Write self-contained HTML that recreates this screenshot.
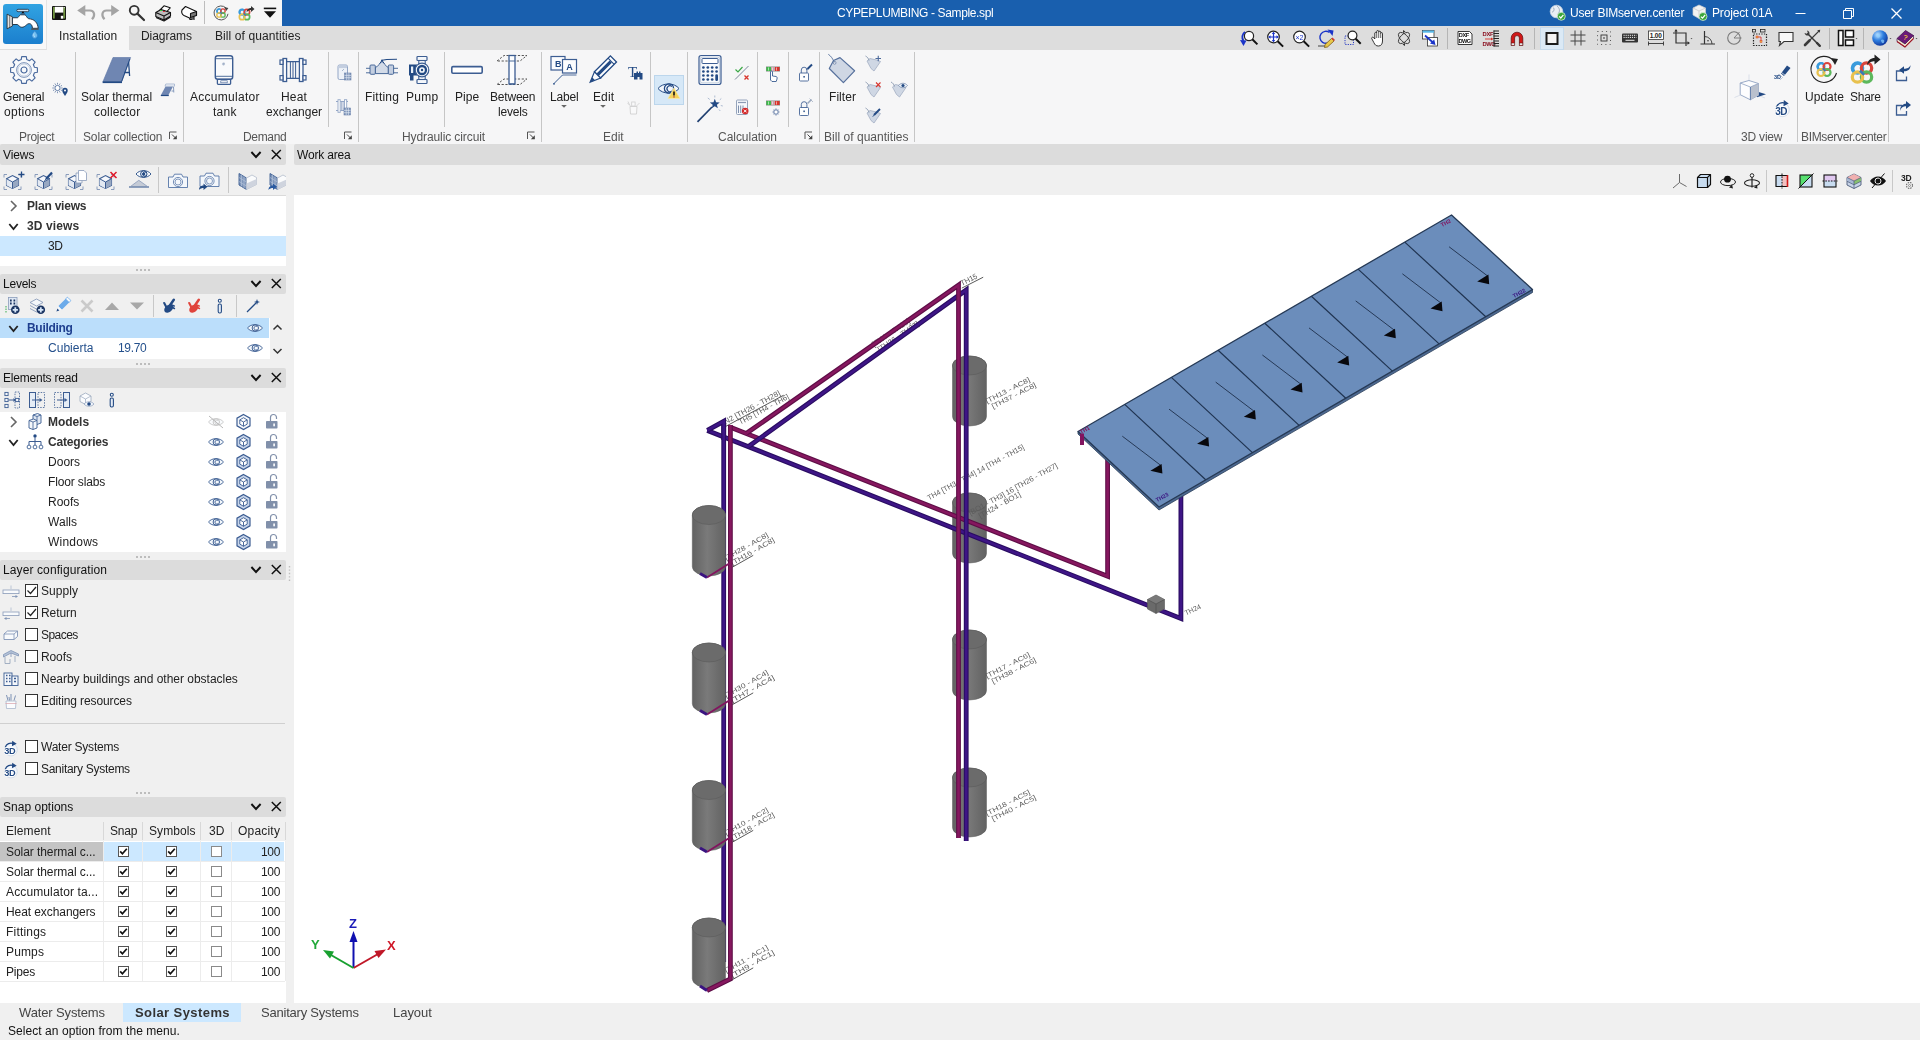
<!DOCTYPE html>
<html lang="en"><head><meta charset="utf-8"><title>CYPEPLUMBING - Sample.spl</title>
<style>
*{box-sizing:border-box;margin:0;padding:0}
html,body{width:1920px;height:1040px;overflow:hidden;background:#f0f0f0;font-family:"Liberation Sans",sans-serif;font-size:12px;color:#222}
.abs{position:absolute}
.t{position:absolute;white-space:nowrap;line-height:14px;height:14px;will-change:transform}
.c{transform:translateX(-50%);text-align:center}
svg{position:absolute;overflow:visible}
#title{position:absolute;left:282px;top:0;width:1638px;height:26px;background:#195fae}
#qa{position:absolute;left:0;top:0;width:282px;height:26px;background:#f6f6f6}
#tabs{position:absolute;left:0;top:26px;width:1920px;height:24px;background:#dddddd}
#tabsel{position:absolute;left:0px;top:26px;width:129px;height:24px;background:#f6f6f6}
#ribbon{position:absolute;left:0;top:50px;width:1920px;height:94px;background:#f6f6f7}
.vsep{position:absolute;width:1px;background:#c4c4c4}
.hdr{position:absolute;height:21px;background:#dcdcdc;border-radius:2px}
.white{position:absolute;background:#fff}
.sel{position:absolute;background:#cce8ff}
.glab{color:#555}
.cb{position:absolute;width:13px;height:13px;border:1px solid #333;background:#fff}
.scb{position:absolute;width:11px;height:11px;border:1px solid #555;background:#fff}
.dots{position:absolute;width:14px;height:2px;background:repeating-linear-gradient(90deg,#bdbdbd 0 2px,transparent 2px 4px)}

</style></head>
<body>
<div id="qa"></div><div id="title"></div><div id="tabs"></div><div id="tabsel"></div><div id="ribbon"></div><div class="abs" style="left:0px;top:0px;width:47px;height:50px;background:#f8f8f8;border-right:1px solid #e4e4e4;border-bottom:1px solid #dedede"></div><div class="t " style="left:836.8px;top:6px;letter-spacing:-0.363px;color:#fff">CYPEPLUMBING - Sample.spl</div><div class="t " style="left:1570.3px;top:6px;letter-spacing:-0.241px;color:#fff">User BIMserver.center</div><div class="t " style="left:1712.3px;top:6px;letter-spacing:-0.158px;color:#fff">Project 01A</div><div class="t " style="left:59.2px;top:29px;letter-spacing:0.077px;">Installation</div><div class="t " style="left:141.2px;top:29px;letter-spacing:-0.056px;">Diagrams</div><div class="t " style="left:215.4px;top:29px;letter-spacing:0.092px;">Bill of quantities</div><div class="t " style="left:3.35px;top:90px;letter-spacing:-0.199px;">General</div><div class="t " style="left:3.65px;top:105.3px;letter-spacing:0.286px;">options</div><div class="t " style="left:81.45px;top:90px;letter-spacing:-0.020px;">Solar thermal</div><div class="t " style="left:93.85px;top:105.3px;letter-spacing:0.180px;">collector</div><div class="t " style="left:189.8px;top:90px;letter-spacing:0.283px;">Accumulator</div><div class="t " style="left:212.8px;top:105.3px;letter-spacing:0.280px;">tank</div><div class="t " style="left:280.75px;top:90px;letter-spacing:0.188px;">Heat</div><div class="t " style="left:265.75px;top:105.3px;letter-spacing:0.007px;">exchanger</div><div class="t " style="left:365.0px;top:90px;letter-spacing:0.189px;">Fitting</div><div class="t " style="left:405.75px;top:90px;letter-spacing:0.288px;">Pump</div><div class="t " style="left:454.95px;top:90px;letter-spacing:0.021px;">Pipe</div><div class="t " style="left:489.95px;top:90px;letter-spacing:-0.200px;">Between</div><div class="t " style="left:497.85px;top:105.3px;letter-spacing:-0.197px;">levels</div><div class="t " style="left:549.75px;top:90px;letter-spacing:-0.172px;">Label</div><div class="t " style="left:592.85px;top:90px;letter-spacing:0.106px;">Edit</div><div class="t " style="left:828.8px;top:90px;letter-spacing:0.056px;">Filter</div><div class="t " style="left:1805.05px;top:90px;letter-spacing:0.034px;">Update</div><div class="t " style="left:1850.35px;top:90px;letter-spacing:-0.264px;">Share</div><div class="t glab" style="left:19.15px;top:130px;letter-spacing:-0.293px;">Project</div><div class="t glab" style="left:82.75px;top:130px;letter-spacing:-0.130px;">Solar collection</div><div class="t glab" style="left:242.85px;top:130px;letter-spacing:-0.343px;">Demand</div><div class="t glab" style="left:401.5px;top:130px;letter-spacing:-0.099px;">Hydraulic circuit</div><div class="t glab" style="left:603.4px;top:130px;letter-spacing:-0.019px;">Edit</div><div class="t glab" style="left:717.5px;top:130px;letter-spacing:-0.033px;">Calculation</div><div class="t glab" style="left:824.4px;top:130px;letter-spacing:0.031px;">Bill of quantities</div><div class="t glab" style="left:1741.35px;top:130px;letter-spacing:-0.197px;">3D view</div><div class="t glab" style="left:1800.55px;top:130px;letter-spacing:-0.337px;">BIMserver.center</div><div class="vsep" style="left:75px;top:52px;height:90px;background:#c6c6c6"></div><div class="vsep" style="left:183px;top:52px;height:90px;background:#c6c6c6"></div><div class="vsep" style="left:358px;top:52px;height:90px;background:#c6c6c6"></div><div class="vsep" style="left:541px;top:52px;height:90px;background:#c6c6c6"></div><div class="vsep" style="left:687px;top:52px;height:90px;background:#c6c6c6"></div><div class="vsep" style="left:819px;top:52px;height:90px;background:#c6c6c6"></div><div class="vsep" style="left:914px;top:52px;height:90px;background:#c6c6c6"></div><div class="vsep" style="left:1727px;top:52px;height:90px;background:#c6c6c6"></div><div class="vsep" style="left:1797px;top:52px;height:90px;background:#c6c6c6"></div><div class="vsep" style="left:1888px;top:52px;height:90px;background:#c6c6c6"></div><div class="vsep" style="left:328px;top:52px;height:75px;background:#c6c6c6"></div><div class="vsep" style="left:444px;top:52px;height:75px;background:#c6c6c6"></div><div class="vsep" style="left:650px;top:52px;height:75px;background:#c6c6c6"></div><div class="vsep" style="left:757px;top:52px;height:75px;background:#c6c6c6"></div><div class="vsep" style="left:788px;top:52px;height:75px;background:#c6c6c6"></div><div class="hdr" style="left:0;top:144px;width:286px;height:21px"></div><div class="t " style="left:2.8px;top:147.8px;letter-spacing:-0.099px;color:#111">Views</div><div class="hdr" style="left:0;top:274px;width:286px;height:20px"></div><div class="t " style="left:2.8px;top:277.3px;letter-spacing:-0.231px;color:#111">Levels</div><div class="hdr" style="left:0;top:368px;width:286px;height:20px"></div><div class="t " style="left:2.8px;top:371.3px;letter-spacing:-0.213px;color:#111">Elements read</div><div class="hdr" style="left:0;top:560px;width:286px;height:20px"></div><div class="t " style="left:2.8px;top:563.3px;letter-spacing:0.107px;color:#111">Layer configuration</div><div class="hdr" style="left:0;top:797px;width:286px;height:20px"></div><div class="t " style="left:2.8px;top:800.3px;letter-spacing:0.020px;color:#111">Snap options</div><div class="hdr" style="left:294px;top:144px;width:1630px;height:21px"></div><div class="t " style="left:296.8px;top:147.8px;letter-spacing:-0.170px;color:#111">Work area</div><div class="abs" style="left:0px;top:196px;width:286px;height:70px;background:#fff;"></div><div class="abs" style="left:0px;top:195px;width:286px;height:1px;background:#dadada;"></div><div class="abs" style="left:0px;top:236px;width:286px;height:20px;background:#cce8ff;"></div><div class="t " style="left:26.8px;top:199px;letter-spacing:-0.207px;font-weight:bold;color:#333">Plan views</div><div class="t " style="left:26.8px;top:219px;letter-spacing:0.117px;font-weight:bold;color:#333">3D views</div><div class="t " style="left:47.8px;top:239px;letter-spacing:-0.370px;">3D</div><div class="abs" style="left:0px;top:318px;width:270px;height:41px;background:#fff;"></div><div class="abs" style="left:0px;top:318px;width:269px;height:20px;background:#bbdefb;"></div><div class="t " style="left:27.3px;top:321px;letter-spacing:-0.299px;font-weight:bold;color:#1f3f8f">Building</div><div class="t " style="left:48.1px;top:341px;letter-spacing:0.018px;color:#24508c">Cubierta</div><div class="t " style="left:117.8px;top:341px;letter-spacing:-0.346px;color:#24508c">19.70</div><div class="abs" style="left:0px;top:412px;width:286px;height:140px;background:#fff;"></div><div class="t " style="left:48.1px;top:415px;letter-spacing:-0.056px;font-weight:bold;color:#333">Models</div><div class="t " style="left:47.8px;top:435px;letter-spacing:-0.172px;font-weight:bold;color:#333">Categories</div><div class="t " style="left:47.8px;top:455px;letter-spacing:0.018px;">Doors</div><div class="t " style="left:47.8px;top:475px;letter-spacing:-0.144px;">Floor slabs</div><div class="t " style="left:47.8px;top:495px;letter-spacing:-0.010px;">Roofs</div><div class="t " style="left:47.8px;top:515px;letter-spacing:0.043px;">Walls</div><div class="t " style="left:47.8px;top:535px;letter-spacing:0.231px;">Windows</div><div class="cb" style="left:25px;top:584px"></div><svg style="left:25px;top:584px" width="13" height="13"><path d="M2.5,6.5 L5.5,9.5 L11,3" fill="none" stroke="#222" stroke-width="1.2"/></svg><div class="t " style="left:41.1px;top:584px;letter-spacing:0.051px;">Supply</div><div class="cb" style="left:25px;top:606px"></div><svg style="left:25px;top:606px" width="13" height="13"><path d="M2.5,6.5 L5.5,9.5 L11,3" fill="none" stroke="#222" stroke-width="1.2"/></svg><div class="t " style="left:41.1px;top:606px;letter-spacing:-0.086px;">Return</div><div class="cb" style="left:25px;top:628px"></div><div class="t " style="left:41.1px;top:628px;letter-spacing:-0.538px;">Spaces</div><div class="cb" style="left:25px;top:650px"></div><div class="t " style="left:41.1px;top:650px;letter-spacing:-0.110px;">Roofs</div><div class="cb" style="left:25px;top:672px"></div><div class="t " style="left:41.1px;top:672px;letter-spacing:-0.018px;">Nearby buildings and other obstacles</div><div class="cb" style="left:25px;top:694px"></div><div class="t " style="left:41.1px;top:694px;letter-spacing:-0.113px;">Editing resources</div><div class="cb" style="left:25px;top:740px"></div><div class="t " style="left:41.1px;top:740px;letter-spacing:-0.223px;">Water Systems</div><div class="cb" style="left:25px;top:762px"></div><div class="t " style="left:41.1px;top:762px;letter-spacing:-0.285px;">Sanitary Systems</div><div class="abs" style="left:0px;top:723px;width:285px;height:1px;background:#d0d0d0;"></div><div class="abs" style="left:0px;top:841px;width:286px;height:162px;background:#fff;"></div><div class="abs" style="left:0px;top:842px;width:103px;height:19px;background:#c4c4c4;"></div><div class="abs" style="left:104px;top:842px;width:180px;height:19px;background:#cce8ff;"></div><div class="t " style="left:5.8px;top:824px;letter-spacing:0.083px;">Element</div><div class="t " style="left:109.8px;top:824px;letter-spacing:-0.231px;">Snap</div><div class="t " style="left:148.8px;top:824px;letter-spacing:0.069px;">Symbols</div><div class="t " style="left:208.8px;top:824px;letter-spacing:-0.020px;">3D</div><div class="t " style="left:238.3px;top:824px;letter-spacing:0.203px;">Opacity</div><div class="vsep" style="left:103px;top:822px;height:18px;background:#d8d8d8"></div><div class="vsep" style="left:103px;top:841px;height:140px;background:#ececec"></div><div class="vsep" style="left:142px;top:822px;height:18px;background:#d8d8d8"></div><div class="vsep" style="left:142px;top:841px;height:140px;background:#ececec"></div><div class="vsep" style="left:200px;top:822px;height:18px;background:#d8d8d8"></div><div class="vsep" style="left:200px;top:841px;height:140px;background:#ececec"></div><div class="vsep" style="left:231px;top:822px;height:18px;background:#d8d8d8"></div><div class="vsep" style="left:231px;top:841px;height:140px;background:#ececec"></div><div class="vsep" style="left:285px;top:822px;height:18px;background:#d8d8d8"></div><div class="vsep" style="left:285px;top:841px;height:140px;background:#ececec"></div><div class="t " style="left:5.8px;top:845px;letter-spacing:-0.067px;">Solar thermal c...</div><div class="abs" style="left:0px;top:861px;width:285px;height:1px;background:#ececec;"></div><div class="scb" style="left:117.5px;top:846px;"></div><svg style="left:117.5px;top:846px" width="11" height="11"><path d="M2.2,5.4 L4.4,7.8 L8.8,2.8" fill="none" stroke="#111" stroke-width="1.7"/></svg><div class="scb" style="left:165.5px;top:846px;"></div><svg style="left:165.5px;top:846px" width="11" height="11"><path d="M2.2,5.4 L4.4,7.8 L8.8,2.8" fill="none" stroke="#111" stroke-width="1.7"/></svg><div class="scb" style="left:210.5px;top:846px;border-color:#8a8a8a"></div><div class="t " style="left:261.3px;top:845px;letter-spacing:-0.307px;">100</div><div class="t " style="left:5.8px;top:865px;letter-spacing:-0.067px;">Solar thermal c...</div><div class="abs" style="left:0px;top:881px;width:285px;height:1px;background:#ececec;"></div><div class="scb" style="left:117.5px;top:866px;"></div><svg style="left:117.5px;top:866px" width="11" height="11"><path d="M2.2,5.4 L4.4,7.8 L8.8,2.8" fill="none" stroke="#111" stroke-width="1.7"/></svg><div class="scb" style="left:165.5px;top:866px;"></div><svg style="left:165.5px;top:866px" width="11" height="11"><path d="M2.2,5.4 L4.4,7.8 L8.8,2.8" fill="none" stroke="#111" stroke-width="1.7"/></svg><div class="scb" style="left:210.5px;top:866px;border-color:#8a8a8a"></div><div class="t " style="left:261.3px;top:865px;letter-spacing:-0.307px;">100</div><div class="t " style="left:5.8px;top:885px;letter-spacing:0.127px;">Accumulator ta...</div><div class="abs" style="left:0px;top:901px;width:285px;height:1px;background:#ececec;"></div><div class="scb" style="left:117.5px;top:886px;"></div><svg style="left:117.5px;top:886px" width="11" height="11"><path d="M2.2,5.4 L4.4,7.8 L8.8,2.8" fill="none" stroke="#111" stroke-width="1.7"/></svg><div class="scb" style="left:165.5px;top:886px;"></div><svg style="left:165.5px;top:886px" width="11" height="11"><path d="M2.2,5.4 L4.4,7.8 L8.8,2.8" fill="none" stroke="#111" stroke-width="1.7"/></svg><div class="scb" style="left:210.5px;top:886px;border-color:#8a8a8a"></div><div class="t " style="left:261.3px;top:885px;letter-spacing:-0.307px;">100</div><div class="t " style="left:5.8px;top:905px;letter-spacing:-0.081px;">Heat exchangers</div><div class="abs" style="left:0px;top:921px;width:285px;height:1px;background:#ececec;"></div><div class="scb" style="left:117.5px;top:906px;"></div><svg style="left:117.5px;top:906px" width="11" height="11"><path d="M2.2,5.4 L4.4,7.8 L8.8,2.8" fill="none" stroke="#111" stroke-width="1.7"/></svg><div class="scb" style="left:165.5px;top:906px;"></div><svg style="left:165.5px;top:906px" width="11" height="11"><path d="M2.2,5.4 L4.4,7.8 L8.8,2.8" fill="none" stroke="#111" stroke-width="1.7"/></svg><div class="scb" style="left:210.5px;top:906px;border-color:#8a8a8a"></div><div class="t " style="left:261.3px;top:905px;letter-spacing:-0.307px;">100</div><div class="t " style="left:5.8px;top:925px;letter-spacing:0.203px;">Fittings</div><div class="abs" style="left:0px;top:941px;width:285px;height:1px;background:#ececec;"></div><div class="scb" style="left:117.5px;top:926px;"></div><svg style="left:117.5px;top:926px" width="11" height="11"><path d="M2.2,5.4 L4.4,7.8 L8.8,2.8" fill="none" stroke="#111" stroke-width="1.7"/></svg><div class="scb" style="left:165.5px;top:926px;"></div><svg style="left:165.5px;top:926px" width="11" height="11"><path d="M2.2,5.4 L4.4,7.8 L8.8,2.8" fill="none" stroke="#111" stroke-width="1.7"/></svg><div class="scb" style="left:210.5px;top:926px;border-color:#8a8a8a"></div><div class="t " style="left:261.3px;top:925px;letter-spacing:-0.307px;">100</div><div class="t " style="left:5.8px;top:945px;letter-spacing:0.150px;">Pumps</div><div class="abs" style="left:0px;top:961px;width:285px;height:1px;background:#ececec;"></div><div class="scb" style="left:117.5px;top:946px;"></div><svg style="left:117.5px;top:946px" width="11" height="11"><path d="M2.2,5.4 L4.4,7.8 L8.8,2.8" fill="none" stroke="#111" stroke-width="1.7"/></svg><div class="scb" style="left:165.5px;top:946px;"></div><svg style="left:165.5px;top:946px" width="11" height="11"><path d="M2.2,5.4 L4.4,7.8 L8.8,2.8" fill="none" stroke="#111" stroke-width="1.7"/></svg><div class="scb" style="left:210.5px;top:946px;border-color:#8a8a8a"></div><div class="t " style="left:261.3px;top:945px;letter-spacing:-0.307px;">100</div><div class="t " style="left:5.8px;top:965px;letter-spacing:-0.204px;">Pipes</div><div class="abs" style="left:0px;top:981px;width:285px;height:1px;background:#ececec;"></div><div class="scb" style="left:117.5px;top:966px;"></div><svg style="left:117.5px;top:966px" width="11" height="11"><path d="M2.2,5.4 L4.4,7.8 L8.8,2.8" fill="none" stroke="#111" stroke-width="1.7"/></svg><div class="scb" style="left:165.5px;top:966px;"></div><svg style="left:165.5px;top:966px" width="11" height="11"><path d="M2.2,5.4 L4.4,7.8 L8.8,2.8" fill="none" stroke="#111" stroke-width="1.7"/></svg><div class="scb" style="left:210.5px;top:966px;border-color:#8a8a8a"></div><div class="t " style="left:261.3px;top:965px;letter-spacing:-0.307px;">100</div><div class="dots" style="left:136px;top:269px"></div><div class="dots" style="left:136px;top:363px"></div><div class="dots" style="left:136px;top:556px"></div><div class="dots" style="left:136px;top:792px"></div><div class="abs" style="left:123px;top:1003px;width:118px;height:19px;background:#cce8ff;"></div><div class="t " style="left:19.0px;top:1006px;letter-spacing:-0.134px;font-size:13px;color:#444">Water Systems</div><div class="t " style="left:135.1px;top:1006px;letter-spacing:0.415px;font-size:13px;font-weight:bold;color:#333">Solar Systems</div><div class="t " style="left:261.1px;top:1006px;letter-spacing:-0.215px;font-size:13px;color:#444">Sanitary Systems</div><div class="t " style="left:393.3px;top:1006px;letter-spacing:-0.039px;font-size:13px;color:#444">Layout</div><div class="t " style="left:8.2px;top:1024px;letter-spacing:0.058px;color:#111">Select an option from the menu.</div><div class="abs" style="left:294px;top:195px;width:1626px;height:808px;background:#fff;"></div><svg id="scene" style="left:0;top:0" width="1920" height="1040" viewBox="0 0 1920 1040"><defs><linearGradient id="tg" x1="0" x2="1" y1="0" y2="0"><stop offset="0" stop-color="#626262"/><stop offset="0.45" stop-color="#7a7a7a"/><stop offset="1" stop-color="#626262"/></linearGradient></defs><path d="M723.7,424 L723.7,962" fill="none" stroke="#2a0d62" stroke-width="4.8" stroke-linejoin="miter" stroke-miterlimit="2.2" stroke-linecap="butt"/><path d="M723.7,424 L723.7,962" fill="none" stroke="#3e1586" stroke-width="2.5999999999999996" stroke-linejoin="miter" stroke-miterlimit="2.2" stroke-linecap="butt"/><path d="M692.3,515.0 L692.3,566.5 A16.600000000000023,9.5 0 0 0 725.5,566.5 L725.5,515.0 A16.600000000000023,9.5 0 0 0 692.3,515.0Z" fill="url(#tg)" stroke="#5c5c5c" stroke-width="0.5"/><ellipse cx="708.9" cy="515.0" rx="16.600000000000023" ry="9.5" fill="#6b6b6b" stroke="#5a5a5a" stroke-width="0.6"/><path d="M692.3,652.5 L692.3,703.5 A16.600000000000023,9.5 0 0 0 725.5,703.5 L725.5,652.5 A16.600000000000023,9.5 0 0 0 692.3,652.5Z" fill="url(#tg)" stroke="#5c5c5c" stroke-width="0.5"/><ellipse cx="708.9" cy="652.5" rx="16.600000000000023" ry="9.5" fill="#6b6b6b" stroke="#5a5a5a" stroke-width="0.6"/><path d="M692.3,790.0 L692.3,841.0 A16.600000000000023,9.5 0 0 0 725.5,841.0 L725.5,790.0 A16.600000000000023,9.5 0 0 0 692.3,790.0Z" fill="url(#tg)" stroke="#5c5c5c" stroke-width="0.5"/><ellipse cx="708.9" cy="790.0" rx="16.600000000000023" ry="9.5" fill="#6b6b6b" stroke="#5a5a5a" stroke-width="0.6"/><path d="M692.3,927.5 L692.3,978.5 A16.600000000000023,9.5 0 0 0 725.5,978.5 L725.5,927.5 A16.600000000000023,9.5 0 0 0 692.3,927.5Z" fill="url(#tg)" stroke="#5c5c5c" stroke-width="0.5"/><ellipse cx="708.9" cy="927.5" rx="16.600000000000023" ry="9.5" fill="#6b6b6b" stroke="#5a5a5a" stroke-width="0.6"/><path d="M952.5,365.5 L952.5,416.5 A17.0,9.5 0 0 0 986.5,416.5 L986.5,365.5 A17.0,9.5 0 0 0 952.5,365.5Z" fill="url(#tg)" stroke="#5c5c5c" stroke-width="0.5"/><ellipse cx="969.5" cy="365.5" rx="17.0" ry="9.5" fill="#6b6b6b" stroke="#5a5a5a" stroke-width="0.6"/><path d="M952.5,502.5 L952.5,553.5 A17.0,9.5 0 0 0 986.5,553.5 L986.5,502.5 A17.0,9.5 0 0 0 952.5,502.5Z" fill="url(#tg)" stroke="#5c5c5c" stroke-width="0.5"/><ellipse cx="969.5" cy="502.5" rx="17.0" ry="9.5" fill="#6b6b6b" stroke="#5a5a5a" stroke-width="0.6"/><path d="M952.5,639.5 L952.5,690.5 A17.0,9.5 0 0 0 986.5,690.5 L986.5,639.5 A17.0,9.5 0 0 0 952.5,639.5Z" fill="url(#tg)" stroke="#5c5c5c" stroke-width="0.5"/><ellipse cx="969.5" cy="639.5" rx="17.0" ry="9.5" fill="#6b6b6b" stroke="#5a5a5a" stroke-width="0.6"/><path d="M952.5,777.5 L952.5,827.5 A17.0,9.5 0 0 0 986.5,827.5 L986.5,777.5 A17.0,9.5 0 0 0 952.5,777.5Z" fill="url(#tg)" stroke="#5c5c5c" stroke-width="0.5"/><ellipse cx="969.5" cy="777.5" rx="17.0" ry="9.5" fill="#6b6b6b" stroke="#5a5a5a" stroke-width="0.6"/><g transform="translate(724.5,561.5) rotate(-29.5)" font-family="Liberation Sans, sans-serif" font-size="6.8" fill="#5c5c5c"><text x="2" y="0.0" textLength="49" lengthAdjust="spacingAndGlyphs">[TH28 - AC8]</text><text x="5" y="7.4" textLength="49" lengthAdjust="spacingAndGlyphs">[TH16 - AC8]</text><path d="M4,8.8 L28,8.8" stroke="#444" stroke-width="0.8"/></g><g transform="translate(724.5,699) rotate(-29.5)" font-family="Liberation Sans, sans-serif" font-size="6.8" fill="#5c5c5c"><text x="2" y="0.0" textLength="49" lengthAdjust="spacingAndGlyphs">[TH30 - AC4]</text><text x="5" y="7.4" textLength="49" lengthAdjust="spacingAndGlyphs">[TH7 - AC4]</text><path d="M4,8.8 L28,8.8" stroke="#444" stroke-width="0.8"/></g><g transform="translate(724.5,836.5) rotate(-29.5)" font-family="Liberation Sans, sans-serif" font-size="6.8" fill="#5c5c5c"><text x="2" y="0.0" textLength="49" lengthAdjust="spacingAndGlyphs">[TH10 - AC2]</text><text x="5" y="7.4" textLength="49" lengthAdjust="spacingAndGlyphs">[TH18 - AC2]</text><path d="M4,8.8 L28,8.8" stroke="#444" stroke-width="0.8"/></g><g transform="translate(724.5,974) rotate(-29.5)" font-family="Liberation Sans, sans-serif" font-size="6.8" fill="#5c5c5c"><text x="2" y="0.0" textLength="49" lengthAdjust="spacingAndGlyphs">[TH11 - AC1]</text><text x="5" y="7.4" textLength="49" lengthAdjust="spacingAndGlyphs">[TH9 - AC1]</text><path d="M4,8.8 L28,8.8" stroke="#444" stroke-width="0.8"/></g><g transform="translate(987,403.5) rotate(-27)" font-family="Liberation Sans, sans-serif" font-size="6.8" fill="#5c5c5c"><text x="0" y="0.0" textLength="49" lengthAdjust="spacingAndGlyphs">[TH13 - AC8]</text><text x="3" y="7.4" textLength="49" lengthAdjust="spacingAndGlyphs">[TH37 - AC8]</text></g><g transform="translate(987,678.5) rotate(-27)" font-family="Liberation Sans, sans-serif" font-size="6.8" fill="#5c5c5c"><text x="0" y="0.0" textLength="49" lengthAdjust="spacingAndGlyphs">[TH17 - AC6]</text><text x="3" y="7.4" textLength="49" lengthAdjust="spacingAndGlyphs">[TH38 - AC6]</text></g><g transform="translate(987,816) rotate(-27)" font-family="Liberation Sans, sans-serif" font-size="6.8" fill="#5c5c5c"><text x="0" y="0.0" textLength="49" lengthAdjust="spacingAndGlyphs">[TH18 - AC5]</text><text x="3" y="7.4" textLength="49" lengthAdjust="spacingAndGlyphs">[TH40 - AC5]</text></g><g transform="translate(724.5,425) rotate(-28.3)" font-family="Liberation Sans, sans-serif" font-size="7.5" fill="#5c5c5c"><text x="1" y="0.0" textLength="63" lengthAdjust="spacingAndGlyphs">N2 [TH26 - TH28]</text><text x="14" y="7.4" textLength="56" lengthAdjust="spacingAndGlyphs">TH5 [TH4 - TH6]</text><path d="M0,1.8 L66,1.8" stroke="#444" stroke-width="0.8"/></g><g transform="translate(874,347) rotate(-34)" font-family="Liberation Sans, sans-serif" font-size="7.5" fill="#5c5c5c"><text x="0" y="0.0" textLength="44" lengthAdjust="spacingAndGlyphs">[TH4 - TH15]</text><text x="2" y="7.4" textLength="48" lengthAdjust="spacingAndGlyphs">[TH26 - TH37]</text></g><g transform="translate(929,500.5) rotate(-28.4)" font-family="Liberation Sans, sans-serif" font-size="7.5" fill="#5c5c5c"><text x="0" y="0.0" textLength="109" lengthAdjust="spacingAndGlyphs">TH4 [TH3 - TH4] 14 [TH4 - TH15]</text></g><g transform="translate(970.5,515.5) rotate(-28.9)" font-family="Liberation Sans, sans-serif" font-size="7.5" fill="#5c5c5c"><text x="0" y="0.0" textLength="100" lengthAdjust="spacingAndGlyphs">[BO1 - TH3] 16 [TH26 - TH27]</text><text x="7" y="7.4" textLength="47" lengthAdjust="spacingAndGlyphs">[TH24 - BO1]</text></g><g transform="translate(961,286.5) rotate(-27)" font-family="Liberation Sans, sans-serif" font-size="7.5" fill="#5c5c5c"><text x="1" y="0.0" textLength="18" lengthAdjust="spacingAndGlyphs">TH15</text><path d="M0,1.8 L24,1.8" stroke="#444" stroke-width="0.8"/></g><g transform="translate(1186,615.5) rotate(-25)" font-family="Liberation Sans, sans-serif" font-size="7" fill="#5c5c5c"><text x="0" y="0.0" textLength="17" lengthAdjust="spacingAndGlyphs">TH24</text></g><path d="M707.3,430.4 L1180.9,618.5 L1180.9,495" fill="none" stroke="#2a0d62" stroke-width="4.8" stroke-linejoin="miter" stroke-miterlimit="2.2" stroke-linecap="butt"/><path d="M707.3,430.4 L1180.9,618.5 L1180.9,495" fill="none" stroke="#3e1586" stroke-width="2.5999999999999996" stroke-linejoin="miter" stroke-miterlimit="2.2" stroke-linecap="butt"/><path d="M730.4,427.2 L1107.6,576.3 L1107.6,457.5" fill="none" stroke="#5e0e47" stroke-width="4.8" stroke-linejoin="miter" stroke-miterlimit="2.2" stroke-linecap="butt"/><path d="M730.4,427.2 L1107.6,576.3 L1107.6,457.5" fill="none" stroke="#86175f" stroke-width="2.5999999999999996" stroke-linejoin="miter" stroke-miterlimit="2.2" stroke-linecap="butt"/><path d="M723.7,440 L723.7,421.3 L707.3,430.4" fill="none" stroke="#2a0d62" stroke-width="4.8" stroke-linejoin="miter" stroke-miterlimit="2.2" stroke-linecap="butt"/><path d="M723.7,440 L723.7,421.3 L707.3,430.4" fill="none" stroke="#3e1586" stroke-width="2.5999999999999996" stroke-linejoin="miter" stroke-miterlimit="2.2" stroke-linecap="butt"/><path d="M748.5,446.5 L966.2,290 L966.2,841" fill="none" stroke="#2a0d62" stroke-width="4.8" stroke-linejoin="miter" stroke-miterlimit="2.2" stroke-linecap="butt"/><path d="M748.5,446.5 L966.2,290 L966.2,841" fill="none" stroke="#3e1586" stroke-width="2.5999999999999996" stroke-linejoin="miter" stroke-miterlimit="2.2" stroke-linecap="butt"/><path d="M746.5,433.3 L958.5,285.2 L958.5,838" fill="none" stroke="#5e0e47" stroke-width="4.8" stroke-linejoin="miter" stroke-miterlimit="2.2" stroke-linecap="butt"/><path d="M746.5,433.3 L958.5,285.2 L958.5,838" fill="none" stroke="#86175f" stroke-width="2.5999999999999996" stroke-linejoin="miter" stroke-miterlimit="2.2" stroke-linecap="butt"/><path d="M730.4,425 L730.4,979 L707,990.5" fill="none" stroke="#5e0e47" stroke-width="4.8" stroke-linejoin="miter" stroke-miterlimit="2.2" stroke-linecap="butt"/><path d="M730.4,425 L730.4,979 L707,990.5" fill="none" stroke="#86175f" stroke-width="2.5999999999999996" stroke-linejoin="miter" stroke-miterlimit="2.2" stroke-linecap="butt"/><path d="M730,563 L707,577.5" fill="none" stroke="#82145f" stroke-width="1.8" stroke-linejoin="miter" stroke-miterlimit="2.2" stroke-linecap="butt"/><path d="M700,573.5 L707,577.5" fill="none" stroke="#3a1380" stroke-width="3" stroke-linejoin="miter" stroke-miterlimit="2.2" stroke-linecap="butt"/><path d="M730,700 L707,714.5" fill="none" stroke="#82145f" stroke-width="1.8" stroke-linejoin="miter" stroke-miterlimit="2.2" stroke-linecap="butt"/><path d="M700,710.5 L707,714.5" fill="none" stroke="#3a1380" stroke-width="3" stroke-linejoin="miter" stroke-miterlimit="2.2" stroke-linecap="butt"/><path d="M730,837.5 L707,852.0" fill="none" stroke="#82145f" stroke-width="1.8" stroke-linejoin="miter" stroke-miterlimit="2.2" stroke-linecap="butt"/><path d="M700,848.0 L707,852.0" fill="none" stroke="#3a1380" stroke-width="3" stroke-linejoin="miter" stroke-miterlimit="2.2" stroke-linecap="butt"/><path d="M700,986 L707,990.5" fill="none" stroke="#3a1380" stroke-width="3" stroke-linejoin="miter" stroke-miterlimit="2.2" stroke-linecap="butt"/><path d="M1147.5,599.5 L1156,595 L1164.5,599.5 L1164.5,609 L1156,613.5 L1147.5,609Z" fill="#6a6a6a" stroke="#555" stroke-width="0.6"/><path d="M1147.5,599.5 L1156,604 L1164.5,599.5 L1156,595Z" fill="#7a7a7a"/><path d="M1147.5,599.5 L1156,604 L1164.5,599.5 M1156,604 L1156,613.5" fill="none" stroke="#4a4a4a" stroke-width="0.6"/><path d="M1078,434.0 L1159,510 L1532.5,292.5 L1532.5,289.5 L1159,507 L1078,431.5Z" fill="#4c6890" stroke="#2a3d58" stroke-width="0.8"/><path d="M1078,431.5 L1451.5,215 L1532.5,289.5 L1159,507Z" fill="#6b8dbb" stroke="#263a56" stroke-width="1.3" stroke-linejoin="round"/><path d="M1124.7,404.4 L1205.7,479.8" stroke="#1f3350" stroke-width="1.2"/><path d="M1171.4,377.4 L1252.4,452.6" stroke="#1f3350" stroke-width="1.2"/><path d="M1218.1,350.3 L1299.1,425.4" stroke="#1f3350" stroke-width="1.2"/><path d="M1264.8,323.2 L1345.8,398.2" stroke="#1f3350" stroke-width="1.2"/><path d="M1311.4,296.2 L1392.4,371.1" stroke="#1f3350" stroke-width="1.2"/><path d="M1358.1,269.1 L1439.1,343.9" stroke="#1f3350" stroke-width="1.2"/><path d="M1404.8,242.1 L1485.8,316.7" stroke="#1f3350" stroke-width="1.2"/><path d="M1122.3,436.2 L1160.8,465.4" stroke="#14233c" stroke-width="0.8"/><path d="M1150.4,470.8 L1161.6,464.0 L1162.4,473.6Z" fill="#08080c"/><path d="M1169.0,409.1 L1207.5,438.3" stroke="#14233c" stroke-width="0.8"/><path d="M1197.1,443.7 L1208.3,436.9 L1209.1,446.5Z" fill="#08080c"/><path d="M1215.7,382.1 L1254.2,411.3" stroke="#14233c" stroke-width="0.8"/><path d="M1243.8,416.7 L1255.0,409.9 L1255.8,419.5Z" fill="#08080c"/><path d="M1262.4,355.0 L1300.9,384.2" stroke="#14233c" stroke-width="0.8"/><path d="M1290.5,389.6 L1301.7,382.8 L1302.5,392.4Z" fill="#08080c"/><path d="M1309.0,327.9 L1347.5,357.1" stroke="#14233c" stroke-width="0.8"/><path d="M1337.2,362.6 L1348.3,355.8 L1349.2,365.4Z" fill="#08080c"/><path d="M1355.7,300.9 L1394.2,330.1" stroke="#14233c" stroke-width="0.8"/><path d="M1383.8,335.5 L1395.0,328.7 L1395.8,338.3Z" fill="#08080c"/><path d="M1402.4,273.8 L1440.9,303.0" stroke="#14233c" stroke-width="0.8"/><path d="M1430.5,308.4 L1441.7,301.6 L1442.5,311.2Z" fill="#08080c"/><path d="M1449.1,246.8 L1487.6,276.0" stroke="#14233c" stroke-width="0.8"/><path d="M1477.2,281.4 L1488.4,274.6 L1489.2,284.2Z" fill="#08080c"/><path d="M1082,433.5 L1082,445" stroke="#82145f" stroke-width="4"/><text x="1081" y="434" font-size="5.5" font-weight="bold" fill="#82145f" font-family="Liberation Sans, sans-serif" transform="rotate(-28 1081 434)">TH1</text><text x="1157" y="502" font-size="5.5" font-weight="bold" fill="#3a1380" font-family="Liberation Sans, sans-serif" transform="rotate(-28 1157 502)">TH23</text><text x="1442" y="227" font-size="5.5" font-weight="bold" fill="#82145f" font-family="Liberation Sans, sans-serif" transform="rotate(-28 1442 227)">TH2</text><text x="1514" y="298" font-size="5.5" font-weight="bold" fill="#3a1380" font-family="Liberation Sans, sans-serif" transform="rotate(-28 1514 298)">TH22</text><g stroke-width="2" fill="none"><path d="M353.5,968 L353.5,940" stroke="#1010b0"/><path d="M353.5,968 L378,954" stroke="#c01828"/><path d="M353.5,968 L331,955" stroke="#18a030"/></g><path d="M353.5,931 L357.5,942 L349.5,942Z" fill="#1010b0"/><path d="M386,949.5 L378.5,958 L374.5,951Z" fill="#c01828"/><path d="M323,950 L334,951.5 L330,958.5Z" fill="#18a030"/><g font-family="Liberation Sans, sans-serif" font-weight="bold" font-size="13"><text x="349" y="928" fill="#1a1ab8">Z</text><text x="387" y="950" fill="#d01828">X</text><text x="311" y="949" fill="#20a838">Y</text></g></svg><svg style="left:0;top:0" width="1920" height="1040" viewBox="0 0 1920 1040"><defs><clipPath id="clipv"><rect x="0" y="165" width="286" height="30"/></clipPath></defs><g transform="translate(3,4)"><defs><linearGradient id="ag" x1="0" y1="0" x2="0" y2="1"><stop offset="0" stop-color="#31a3e2"/><stop offset="1" stop-color="#1b7fce"/></linearGradient></defs><rect x="0" y="0" width="40" height="40" rx="3" fill="url(#ag)"/><path d="M4.1,10.2 L9.4,12.8 L9.4,22 L4.1,24.8Z" fill="#e4e4e4" stroke="#222" stroke-width="0.8" stroke-linejoin="round"/><path d="M6.7,11.6 L6.7,23.4" stroke="#444" stroke-width="0.7"/><path d="M9.4,13.75 L14.4,13.75 C15.5,13.75 16,11.3 17.5,10.8 L22,10.8 C23.5,11.5 23.8,14 25.5,14.6 C28,15 30.5,15.5 32.4,17.5 C34.3,19.5 35,22 35.2,24.3 L29.4,24.3 C29.3,22.5 29,20.8 27.4,19.9 C25.8,19.2 24.5,20 23.4,21 C22,22.3 20.5,23.3 18.9,23.3 C17,23.3 16,21.5 14.4,20.5 L9.4,20.5Z" fill="#fff" stroke="#1c2a3a" stroke-width="0.9" stroke-linejoin="round"/><rect x="13.8" y="5.3" width="12" height="2.4" rx="1.2" fill="#cfe3f3" stroke="#1c2a3a" stroke-width="0.8"/><rect x="18.9" y="7.7" width="2" height="1.6" fill="#111"/><path d="M17.3,10.8 L18,9.2 L21.8,9.2 L22.4,10.8Z" fill="#3a5a78"/><rect x="28.2" y="24.3" width="7.4" height="1.6" fill="#555"/><path d="M31.7,26.8 C34,29.5 34.5,30.5 34.5,31.6 A2.8,2.8 0 0 1 28.9,31.6 C28.9,30.5 29.5,29.5 31.7,26.8Z" fill="#6fbdf0" stroke="#2a78c8" stroke-width="0.6"/><path d="M31,29.5 C30.5,31 31,32.5 32,33" fill="none" stroke="#d8eefc" stroke-width="0.7"/></g><g transform="translate(52,6)"><rect x="0" y="0" width="14" height="14" rx="1" fill="#111"/><rect x="1" y="1" width="1.8" height="11.5" fill="#6f9440"/><rect x="11.3" y="1" width="1.8" height="11.5" fill="#6f9440"/><rect x="2.8" y="0.8" width="8.5" height="5.8" fill="#fff"/><rect x="8.8" y="9.8" width="2.4" height="2.9" fill="#fff"/><rect x="11.7" y="1.2" width="1" height="1" fill="#fff"/></g><g transform="translate(77,5.5)"><path d="M7,5 L13,5 C17.5,5 18.5,10 15,13.8" fill="none" stroke="#a4a4a4" stroke-width="2.2"/><path d="M8.3,-0.5 L8.3,10.5 L0.2,5Z" fill="#a4a4a4"/></g><g transform="translate(119.5,5.5) scale(-1,1)"><path d="M7,5 L13,5 C17.5,5 18.5,10 15,13.8" fill="none" stroke="#a4a4a4" stroke-width="2.2"/><path d="M8.3,-0.5 L8.3,10.5 L0.2,5Z" fill="#a4a4a4"/></g><circle cx="134.2" cy="10.3" r="4.4" fill="none" stroke="#333" stroke-width="1.9"/><path d="M137.4,13.6 L144,20" stroke="#333" stroke-width="2.2" stroke-linecap="round"/><g transform="translate(155,5)" stroke="#111" stroke-width="1.1" stroke-linejoin="round"><path d="M5,5 L9,0.8 L15.2,2.8 L11.5,7Z" fill="#fff"/><path d="M0.8,7.5 L6,4.5 L15.5,7.5 L15.5,11 L9,15 L0.8,11.5Z" fill="#bdbdbd"/><path d="M0.8,7.5 L9,11 L15.5,7.5 M9,11 L9,15" fill="none"/><path d="M1,12.5 L9,16 L15.5,12" fill="none"/></g><rect x="160" y="10" width="2" height="1" fill="#3c3"/><rect x="163" y="11" width="2" height="1" fill="#d33"/><g transform="translate(181,5)" stroke="#111" stroke-width="1.1" stroke-linejoin="round"><path d="M1,5 L4.5,1.5 L15.5,6.5 L15.5,10.5 L12,10 L12,14 L9,14.5 L8.5,13 L3,10.5 C0.5,9 0.5,6.5 1,5Z" fill="#fff"/><path d="M9.5,8.5 L15.5,6.5 L15.5,10.5 L9.5,12.5Z" fill="#777"/><path d="M10,12.5 L10,15 M13,11.5 L13,15" fill="none"/></g><rect x="204" y="1" width="1" height="23" fill="#bdbdbd"/><g transform="translate(221,13)" ><g transform="scale(0.42)"><circle cx="-4.6" cy="-4.6" r="5.3" fill="none" stroke="#3a9bdc" stroke-width="3.3"/><circle cx="4.6" cy="-4.6" r="5.3" fill="none" stroke="#d9453c" stroke-width="3.3"/><circle cx="4.6" cy="4.6" r="5.3" fill="none" stroke="#5cb85c" stroke-width="3.3"/><circle cx="-4.6" cy="4.6" r="5.3" fill="none" stroke="#e8c14e" stroke-width="3.3"/><path d="M-8.3,-0.9 A5.3,5.3 0 0 1 -0.9,-8.3" fill="none" stroke="#3a9bdc" stroke-width="3.3"/><path d="M-2,-1.8 L2.2,2.4" stroke="#3a78b8" stroke-width="2.6"/></g><path d="M5.2,-4.8 A7,7 0 1 0 7,0.8" fill="none" stroke="#555" stroke-width="1"/><path d="M3.2,-6 L7.4,-5 L5.2,-2Z" fill="#444"/></g><g transform="translate(244.5,14.5)" ><g transform="scale(0.52)"><circle cx="-4.6" cy="-4.6" r="5.3" fill="none" stroke="#3a9bdc" stroke-width="3.3"/><circle cx="4.6" cy="-4.6" r="5.3" fill="none" stroke="#d9453c" stroke-width="3.3"/><circle cx="4.6" cy="4.6" r="5.3" fill="none" stroke="#5cb85c" stroke-width="3.3"/><circle cx="-4.6" cy="4.6" r="5.3" fill="none" stroke="#e8c14e" stroke-width="3.3"/><path d="M-8.3,-0.9 A5.3,5.3 0 0 1 -0.9,-8.3" fill="none" stroke="#3a9bdc" stroke-width="3.3"/><path d="M-2,-1.8 L2.2,2.4" stroke="#3a78b8" stroke-width="2.6"/></g><path d="M2,-2 C2.5,-5.5 4.5,-6.5 6.5,-6.5 L6.5,-8.5 L10,-5.5 L6.5,-2.5 L6.5,-4.5 C5,-4.5 3.5,-4 2,-2Z" fill="#333"/></g><rect x="263.8" y="7.6" width="12.4" height="1.6" fill="#111"/><path d="M264,11.3 L276,11.3 L270,17.8Z" fill="#111"/><circle cx="1556.5" cy="11.5" r="6.3" fill="#e8eef5" stroke="#c8d4e2" stroke-width="0.8"/><path d="M1553,7.5 C1555,9 1554,11 1552,12.5 M1557,6 C1559.5,8 1560.5,11 1558,14" stroke="#9ab" stroke-width="1" fill="none"/><circle cx="1561.3" cy="16.3" r="4" fill="#3aa53a" stroke="#e8f5e8" stroke-width="0.7"/><path d="M1559.2,16.4 L1560.8,18 L1563.4,14.8" fill="none" stroke="#fff" stroke-width="1.2"/><path d="M1693,8 L1699,5 L1705.5,8 L1705.5,15 L1699,18.5 L1693,15Z" fill="#f2f2f2" stroke="#d0d0d0" stroke-width="0.7"/><path d="M1693,8 L1699,11 L1705.5,8 M1699,11 L1699,18.5" fill="none" stroke="#c4c4c4" stroke-width="0.7"/><circle cx="1703" cy="16.5" r="4" fill="#3aa53a" stroke="#e8f5e8" stroke-width="0.7"/><path d="M1700.9,16.6 L1702.5,18.2 L1705.1,15" fill="none" stroke="#fff" stroke-width="1.2"/><path d="M1795.5,13.5 L1805.5,13.5" stroke="#fff" stroke-width="1"/><path d="M1843.5,10.5 L1851.5,10.5 L1851.5,18.5 L1843.5,18.5Z M1845.5,10.5 L1845.5,8.5 L1853.5,8.5 L1853.5,16.5 L1851.5,16.5" fill="none" stroke="#fff" stroke-width="1"/><path d="M1891.5,8.5 L1901.5,18.5 M1901.5,8.5 L1891.5,18.5" stroke="#fff" stroke-width="1.3"/><g transform="translate(24,70)" ><path d="M-2.78,-10.44 L-2.30,-13.40 L2.30,-13.40 L2.78,-10.44 L5.42,-9.34 L7.85,-11.10 L11.10,-7.85 L9.34,-5.42 L10.44,-2.78 L13.40,-2.30 L13.40,2.30 L10.44,2.78 L9.34,5.42 L11.10,7.85 L7.85,11.10 L5.42,9.34 L2.78,10.44 L2.30,13.40 L-2.30,13.40 L-2.78,10.44 L-5.42,9.34 L-7.85,11.10 L-11.10,7.85 L-9.34,5.42 L-10.44,2.78 L-13.40,2.30 L-13.40,-2.30 L-10.44,-2.78 L-9.34,-5.42 L-11.10,-7.85 L-7.85,-11.10 L-5.42,-9.34Z" fill="#f7f9fc" stroke="#4a6a9e" stroke-width="1.15" stroke-linejoin="round"/><circle r="7.4" fill="none" stroke="#4a6a9e" stroke-width="0.7"/><circle r="6.1" fill="none" stroke="#4a6a9e" stroke-width="0.5" opacity="0.6"/><circle r="3" fill="none" stroke="#4a6a9e" stroke-width="1.2"/></g><g transform="translate(57.5,88)" ><circle r="2.6" fill="#fff" stroke="#3c5d92" stroke-width="0.8"/><path d="M3.60,0.00 L5.20,0.00" stroke="#3c5d92" stroke-width="0.8" opacity="0.8"/><path d="M3.12,1.80 L4.50,2.60" stroke="#3c5d92" stroke-width="0.8" opacity="0.8"/><path d="M1.80,3.12 L2.60,4.50" stroke="#3c5d92" stroke-width="0.8" opacity="0.8"/><path d="M0.00,3.60 L0.00,5.20" stroke="#3c5d92" stroke-width="0.8" opacity="0.8"/><path d="M-1.80,3.12 L-2.60,4.50" stroke="#3c5d92" stroke-width="0.8" opacity="0.8"/><path d="M-3.12,1.80 L-4.50,2.60" stroke="#3c5d92" stroke-width="0.8" opacity="0.8"/><path d="M-3.60,0.00 L-5.20,0.00" stroke="#3c5d92" stroke-width="0.8" opacity="0.8"/><path d="M-3.12,-1.80 L-4.50,-2.60" stroke="#3c5d92" stroke-width="0.8" opacity="0.8"/><path d="M-1.80,-3.12 L-2.60,-4.50" stroke="#3c5d92" stroke-width="0.8" opacity="0.8"/><path d="M-0.00,-3.60 L-0.00,-5.20" stroke="#3c5d92" stroke-width="0.8" opacity="0.8"/><path d="M1.80,-3.12 L2.60,-4.50" stroke="#3c5d92" stroke-width="0.8" opacity="0.8"/><path d="M3.12,-1.80 L4.50,-2.60" stroke="#3c5d92" stroke-width="0.8" opacity="0.8"/></g><g transform="translate(65,91.5)" ><path d="M0,4.5 C-2.5,1 -2.7,0 -2.7,-1 A2.7,2.7 0 0 1 2.7,-1 C2.7,0 2.5,1 0,4.5Z" fill="#234a84"/><circle cy="-1" r="1" fill="#fff"/></g><path d="M103,81.5 L121.8,81.5 L130.6,57.5 L113,57.5Z" fill="#6f86b2" stroke="#5a74a4" stroke-width="0.6"/><path d="M102.6,82.2 L122,82.2" stroke="#234a84" stroke-width="1.8"/><path d="M129.8,59 L121.6,81.5" stroke="#234a84" stroke-width="1"/><path d="M128.6,62 L129.6,76 M124.5,72.5 L129.4,72.5" stroke="#234a84" stroke-width="1.3" fill="none"/><path d="M161,95 L168.5,95 L173,86.5 L165.5,86.5Z" fill="#6f86b2"/><path d="M160.8,95.5 L168.8,95.5" stroke="#234a84" stroke-width="1.2"/><path d="M165,86.2 L165.8,84 L174.5,84 L174.5,86.2 Z" fill="#f4f6fa" stroke="#9fb0cc" stroke-width="0.8"/><path d="M173.5,87 L173.8,92.5 M171.5,91 L173.7,91" stroke="#7d93b8" stroke-width="0.9"/><g transform="translate(224,70)" ><rect x="-8.7" y="-14.3" width="17.4" height="23.6" rx="2.5" fill="#f9fafc" stroke="#3c5d92" stroke-width="1.4"/><path d="M-8.5,-11.3 L8.5,-11.3" stroke="#3c5d92" stroke-width="0.9"/><path d="M-8.5,6.3 L8.5,6.3" stroke="#3c5d92" stroke-width="0.9"/><rect x="-6.6" y="9.3" width="13.2" height="5" rx="0.8" fill="#f9fafc" stroke="#3c5d92" stroke-width="1.3"/><rect x="-3.2" y="10.8" width="6.4" height="2" fill="none" stroke="#3c5d92" stroke-width="0.6"/><circle cx="-0.5" cy="-6" r="1.2" fill="none" stroke="#8e9fbb" stroke-width="0.5"/><path d="M-1,-5.6 L0.2,-6.6" stroke="#234a84" stroke-width="0.7"/></g><g transform="translate(293,70)" ><rect x="-10" y="-11.5" width="3.6" height="23" fill="#fbfcfe" stroke="#3c5d92" stroke-width="1.3"/><rect x="6.4" y="-11.5" width="3.6" height="23" fill="#fbfcfe" stroke="#3c5d92" stroke-width="1.3"/><rect x="-13" y="-10" width="3" height="4.4" fill="#fbfcfe" stroke="#3c5d92" stroke-width="1.2"/><rect x="-13" y="5.6" width="3" height="4.4" fill="#fbfcfe" stroke="#3c5d92" stroke-width="1.2"/><rect x="10" y="-10" width="3" height="4.4" fill="#fbfcfe" stroke="#3c5d92" stroke-width="1.2"/><rect x="10" y="5.6" width="3" height="4.4" fill="#fbfcfe" stroke="#3c5d92" stroke-width="1.2"/><path d="M-6.4,-8.3 L6.4,-8.3 M-6.4,8.3 L6.4,8.3" stroke="#3c5d92" stroke-width="1.2"/><path d="M-2.6,-8 L-2.6,8 M0,-8 L0,8 M2.6,-8 L2.6,8" stroke="#3c5d92" stroke-width="1"/></g><g transform="translate(344,73)" ><g opacity="1"><rect x="-6" y="-8" width="9.5" height="14.5" rx="1.5" fill="#eef2f8" stroke="#93a6c6" stroke-width="1"/><rect x="-5.5" y="-7.5" width="8.5" height="2.6" fill="#c3cee0"/><path d="M-1.5,-2.5 L-0.5,-3.5" stroke="#234a84" stroke-width="0.7"/><rect x="0.5" y="0" width="6.5" height="7" fill="#7d93b8" stroke="#6c83ab" stroke-width="0.6"/><path d="M0.5,2.4 L7,2.4 M0.5,4.7 L7,4.7 M2.7,0 L2.7,7 M4.9,0 L4.9,7" stroke="#e8eef6" stroke-width="0.6"/></g></g><g transform="translate(343.5,107.5)" ><g opacity="1"><path d="M-7.5,-6 L4.5,-6 M-7.5,3 L4.5,3" stroke="#93a6c6" stroke-width="1"/><rect x="-5.5" y="-7.8" width="2.2" height="12.6" fill="#fff" stroke="#93a6c6" stroke-width="0.9"/><rect x="1" y="-7.8" width="2.2" height="12.6" fill="#fff" stroke="#93a6c6" stroke-width="0.9"/><path d="M-1.9,-6 L-1.9,3 M-0.4,-6 L-0.4,3" stroke="#93a6c6" stroke-width="0.8"/><rect x="0.5" y="0.5" width="6.5" height="7" fill="#7d93b8" stroke="#6c83ab" stroke-width="0.6"/><path d="M0.5,2.9 L7,2.9 M0.5,5.2 L7,5.2 M2.7,0.5 L2.7,7.5 M4.9,0.5 L4.9,7.5" stroke="#e8eef6" stroke-width="0.6"/></g></g><g transform="translate(382,70)" ><path d="M-16,-1.7 L16,-1.7 M-16,2.8 L16,2.8" stroke="#3c5d92" stroke-width="0.9"/><path d="M-6.7,-2.6 C-3.5,-2.8 -2.2,-8.3 0,-8.3 C2.2,-8.3 3.5,-2.8 6.4,-2.6 L6.4,3.6 L-6.7,3.6Z" fill="#d3dbe8" stroke="#3c5d92" stroke-width="0.9"/><rect x="-12" y="-5" width="5.3" height="9.3" rx="1" fill="#c3cee0" stroke="#3c5d92" stroke-width="0.9"/><rect x="6.3" y="-5" width="5.3" height="9.3" rx="1" fill="#c3cee0" stroke="#3c5d92" stroke-width="0.9"/><path d="M-2.2,-6.5 L0,-9.6 L2.2,-6.5" fill="none" stroke="#234a84" stroke-width="1"/><path d="M0,-9.6 C2,-10.8 4,-10.8 15,-10.8" fill="none" stroke="#234a84" stroke-width="1.1"/><circle cy="-9.4" r="1" fill="#234a84"/></g><g transform="translate(422,70)" ><rect x="-5" y="-13.5" width="10" height="4" rx="0.8" fill="#f4f7fb" stroke="#3c5d92" stroke-width="1.2"/><rect x="-5" y="9.5" width="10" height="4" rx="0.8" fill="#f4f7fb" stroke="#3c5d92" stroke-width="1.2"/><rect x="-3.2" y="-9.5" width="6.4" height="4" fill="#f4f7fb" stroke="#3c5d92" stroke-width="1.1"/><rect x="-3.2" y="5.5" width="6.4" height="4" fill="#f4f7fb" stroke="#3c5d92" stroke-width="1.1"/><path d="M-13,-5.5 L-5,-5.5 L-5,5.5 L-8.5,5.5 L-8.5,10.5 L-12,10.5 L-12,5.5 L-13,5.5Z" fill="#234a84"/><rect x="-11" y="-3.5" width="2.2" height="6.5" fill="#e8eef6"/><circle r="6.8" fill="#f4f7fb" stroke="#3c5d92" stroke-width="1.2"/><circle r="4" fill="none" stroke="#234a84" stroke-width="2.3"/><circle r="1.2" fill="#234a84"/></g><rect x="451.8" y="66.6" width="30.4" height="6.6" rx="1.2" fill="#fff" stroke="#3c5d92" stroke-width="1.6"/><g transform="translate(512,70)" ><path d="M-15,-9 L-8,-14.5 L15,-14.5 L8,-9Z M-15,14.5 L-8,9 L15,9 L8,14.5Z" fill="none" stroke="#555" stroke-width="1" stroke-dasharray="2.2,1.6"/><rect x="-3" y="-14.5" width="6" height="28.5" fill="#fcfdfe" stroke="#3c5d92" stroke-width="1.3"/><path d="M-3,-9 L3,-9 M-3,14 L3,14" stroke="#3c5d92" stroke-width="0.9"/></g><g transform="translate(564,70)" ><rect x="-13" y="-13.5" width="14" height="13.5" fill="#fbfcfe" stroke="#3c5d92" stroke-width="1.2"/><rect x="-1.5" y="-10.5" width="14" height="13.5" fill="#fbfcfe" stroke="#3c5d92" stroke-width="1.2"/><path d="M-1.5,5 L12.5,5" stroke="#3c5d92" stroke-width="0.9"/><path d="M-1.5,5 L-10,13.5" stroke="#234a84" stroke-width="0.9"/><circle cx="-10" cy="13.8" r="0.9" fill="#234a84"/><text x="-9" y="-3.5" font-family="Liberation Sans, sans-serif" font-weight="bold" font-size="9" fill="#234a84">B</text><text x="2.3" y="-0.2" font-family="Liberation Sans, sans-serif" font-weight="bold" font-size="9" fill="#234a84">A</text></g><g transform="translate(600.8,71.6) scale(0.94)" ><g transform="rotate(45)"><rect x="-4.6" y="-19" width="9.2" height="24" fill="#fbfcfe" stroke="#234a84" stroke-width="1.4"/><rect x="-1.7" y="-15" width="3.4" height="20" fill="#234a84"/><path d="M-4.6,-15.5 L4.6,-15.5" stroke="#234a84" stroke-width="1.1"/><path d="M-4.6,5 L0,16 L4.6,5Z" fill="#fbfcfe" stroke="#234a84" stroke-width="1.3"/><path d="M-2.2,10.8 L0,16 L2.2,10.8Z" fill="#234a84"/></g></g><text x="628" y="77" font-family="Liberation Serif, serif" font-size="15" fill="#234a84">T</text><path d="M634,73 L636.5,73 L636.5,71.5 L638,71.5 L638,73 L639,73 L639,71.5 L640.5,71.5 L640.5,73 L642.5,73 L642.5,79.5 L639.5,79.5 L639.5,77 L637.5,77 L637.5,79.5 L634,79.5Z" fill="#234a84"/><g transform="translate(633.5,108)" ><g opacity="0.35"><path d="M-3.5,-1.5 L3.5,-1.5 L3,6 L-3,6Z" fill="#fff" stroke="#8a8a8a" stroke-width="0.9"/><rect x="-1.8" y="-6" width="3.4" height="4" fill="#fff" stroke="#8a8a8a" stroke-width="0.8"/><path d="M-6,-5 L-3,-2 M6,-5 L3,-2 M-5.5,-6.5 L-4,-3" stroke="#8a8a8a" stroke-width="0.8"/></g></g><path d="M561.2,105 L566.8,105 L564,107.8Z" fill="#666"/><path d="M600.2,105 L605.8,105 L603,107.8Z" fill="#666"/><rect x="654.5" y="75.5" width="29" height="29" fill="#d6e8f7" stroke="#bcd6ec" stroke-width="1"/><g transform="translate(668.5,88.5)" ><path d="M-10.5,0 C-6,-6 6,-6 10.5,0 C6,6 -6,6 -10.5,0Z" fill="#f2f6fb" stroke="#234a84" stroke-width="1"/><circle cx="0.5" cy="0" r="4.6" fill="none" stroke="#234a84" stroke-width="1.3"/><path d="M3.5,-2 A3,3 0 1 0 3.5,2.5" fill="none" stroke="#234a84" stroke-width="1.2"/></g><g transform="translate(674,94)" ><path d="M0,-6 L6,4.5 L-6,4.5Z" fill="#f3d35c" stroke="#f8e9a8" stroke-width="0.8"/><rect x="-0.8" y="-2.5" width="1.6" height="4" fill="#111"/><rect x="-0.7" y="2.3" width="1.4" height="1.2" fill="#a33"/></g><g transform="translate(710,70)" ><rect x="-11" y="-14.5" width="22" height="29" rx="2.2" fill="#f8fafc" stroke="#3c5d92" stroke-width="1.2"/><rect x="-9.4" y="-12.9" width="18.8" height="25.8" rx="1.2" fill="none" stroke="#3c5d92" stroke-width="0.5" opacity="0.6"/><rect x="-8" y="-11.5" width="16" height="5" rx="0.8" fill="#fff" stroke="#3c5d92" stroke-width="1"/><circle cx="-6.6" cy="-2.5" r="1.35" fill="#234a84"/><circle cx="-2.2" cy="-2.5" r="1.35" fill="#234a84"/><circle cx="2.2" cy="-2.5" r="1.35" fill="#234a84"/><circle cx="6.6" cy="-2.5" r="1.35" fill="#234a84"/><circle cx="-6.6" cy="1.5" r="1.35" fill="#234a84"/><circle cx="-2.2" cy="1.5" r="1.35" fill="#234a84"/><circle cx="2.2" cy="1.5" r="1.35" fill="#234a84"/><circle cx="6.6" cy="1.5" r="1.35" fill="#234a84"/><circle cx="-6.6" cy="5.5" r="1.35" fill="#234a84"/><circle cx="-2.2" cy="5.5" r="1.35" fill="#234a84"/><circle cx="2.2" cy="5.5" r="1.35" fill="#234a84"/><circle cx="-6.6" cy="9.5" r="1.35" fill="#234a84"/><circle cx="-2.2" cy="9.5" r="1.35" fill="#234a84"/><circle cx="2.2" cy="9.5" r="1.35" fill="#234a84"/><rect x="5.3" y="4.3" width="2.7" height="6.6" rx="1.2" fill="#234a84"/></g><path d="M697.5,121.8 L712,107" stroke="#1f3f70" stroke-width="1.7"/><g transform="translate(714.8,104)" ><path d="M0.00,-5.20 L1.29,-1.78 L4.95,-1.61 L2.09,0.68 L3.06,4.21 L0.00,2.20 L-3.06,4.21 L-2.09,0.68 L-4.95,-1.61 L-1.29,-1.78Z" fill="#234a84"/><path d="M-7,-6 L-5,-4.5 M0,-8.5 L0,-6.5 M6.5,-5.5 L5,-4.2 M8,2 L6,1.5 M5.5,7 L4.2,5.5" stroke="#8fa3c2" stroke-width="0.7"/></g><g transform="translate(742,73)" ><path d="M-6.5,-3.5 L-4,-1 L0.5,-6" fill="none" stroke="#3aa845" stroke-width="1.2"/><path d="M-7,6.5 L6.5,-7" stroke="#6e7c90" stroke-width="0.9"/><path d="M2.5,2.5 L6.5,6.5 M6.5,2.5 L2.5,6.5" stroke="#d8342c" stroke-width="1.3"/></g><g transform="translate(742,107.5)" ><rect x="-5.5" y="-7.5" width="11" height="14.5" rx="1" fill="#f4f7fb" stroke="#8a9ab4" stroke-width="0.9"/><path d="M-4,-5 L4,-5" stroke="#8a9ab4" stroke-width="1.2"/><path d="M-3.5,-2 L-3.5,5.5 M-1.3,-2 L-1.3,5.5 M1,-2 L1,5.5" stroke="#7f90ad" stroke-width="1"/><circle cx="3.2" cy="3.5" r="3.3" fill="#d42a2a"/><path d="M1.8,2.1 L4.6,4.9 M4.6,2.1 L1.8,4.9" stroke="#fff" stroke-width="1"/></g><g transform="translate(773,74.5)" ><rect x="-7" y="-8" width="14" height="5" fill="#888"/><rect x="-6.5" y="-7.5" width="4.5" height="4" fill="#3dbb4a"/><rect x="-2" y="-7.5" width="4" height="4" fill="#c9a0a8"/><rect x="2" y="-7.5" width="4.5" height="4" fill="#d8342c"/><path d="M-4.5,-7 L-4.5,-4 M-0.5,-7 L-0.5,-4 M3.5,-7 L3.5,-4" stroke="#fff" stroke-width="0.7" opacity="0.8"/><path d="M-2.5,5.5 L-2.5,-2.5 A1,1 0 0 1 -0.5,-2.5 L-0.5,1.5 L3,2 C4,2.2 4.3,3 4,4.5 L3.2,7 L-1,7Z" fill="#fff" stroke="#234a84" stroke-width="0.8"/></g><g transform="translate(773,108.5)" ><rect x="-7" y="-8" width="14" height="5" fill="#888"/><rect x="-6.5" y="-7.5" width="4.5" height="4" fill="#3dbb4a"/><rect x="-2" y="-7.5" width="4" height="4" fill="#c9a0a8"/><rect x="2" y="-7.5" width="4.5" height="4" fill="#d8342c"/><path d="M-4.5,-7 L-4.5,-4 M-0.5,-7 L-0.5,-4 M3.5,-7 L3.5,-4" stroke="#fff" stroke-width="0.7" opacity="0.8"/><g transform="translate(3,3.5)" ><path d="M1.80,0.00 L3.40,0.00" stroke="#7288ad" stroke-width="1.2"/><path d="M1.27,1.27 L2.40,2.40" stroke="#7288ad" stroke-width="1.2"/><path d="M0.00,1.80 L0.00,3.40" stroke="#7288ad" stroke-width="1.2"/><path d="M-1.27,1.27 L-2.40,2.40" stroke="#7288ad" stroke-width="1.2"/><path d="M-1.80,0.00 L-3.40,0.00" stroke="#7288ad" stroke-width="1.2"/><path d="M-1.27,-1.27 L-2.40,-2.40" stroke="#7288ad" stroke-width="1.2"/><path d="M-0.00,-1.80 L-0.00,-3.40" stroke="#7288ad" stroke-width="1.2"/><path d="M1.27,-1.27 L2.40,-2.40" stroke="#7288ad" stroke-width="1.2"/><circle r="2" fill="#fff" stroke="#7288ad" stroke-width="0.8"/></g></g><g transform="translate(804.5,74)" ><rect x="-5" y="-1" width="9" height="8" rx="0.8" fill="#fff" stroke="#3c5d92" stroke-width="1" opacity="0.85"/><path d="M-3.2,-1 L-3.2,-4 A2.8,2.8 0 0 1 2.4,-4 L2.4,-1" fill="none" stroke="#3c5d92" stroke-width="1" opacity="0.85"/><rect x="-1.1" y="2" width="1.4" height="1.6" fill="#234a84"/><path d="M3,-5 L7.5,-9.5" stroke="#234a84" stroke-width="2"/><path d="M2,-4 L3.5,-5.5" stroke="#234a84" stroke-width="0.8"/></g><g transform="translate(804.5,108.5)" ><rect x="-5" y="-1" width="9" height="8" rx="0.8" fill="#fff" stroke="#3c5d92" stroke-width="1" opacity="0.85"/><path d="M-3.2,-1 L-3.2,-4 A2.8,2.8 0 0 1 2.4,-4 L2.4,-1" fill="none" stroke="#3c5d92" stroke-width="1" opacity="0.85"/><rect x="-1.1" y="2" width="1.4" height="1.6" fill="#234a84"/><path d="M3,-5 L7,-9" stroke="#9aa8bd" stroke-width="1.6"/><path d="M5,-10 L8.5,-6.5" stroke="#9aa8bd" stroke-width="0.7"/></g><path d="M829.3,68.5 L833.5,60.5 L840,57.6 L854.6,70.8 L843.4,82.6Z" fill="#cfd7e4" stroke="#56709c" stroke-width="1.2" stroke-linejoin="round"/><circle cx="834.6" cy="62.8" r="1.4" fill="#f5f5f5" stroke="#56709c" stroke-width="0.7"/><path d="M828.3,54.3 C831,56 833,59 834.3,62.5" fill="none" stroke="#56709c" stroke-width="0.9"/><g transform="translate(873.5,64)" ><path d="M-6.5,-3 L-3.5,-5.5 L3,-4 L7,-2.5 L0.5,7 L-2.5,4.5Z" fill="#cfd7e4" stroke="#a3afc3" stroke-width="0.8"/><path d="M-8,-8 C-6,-7 -5,-5.5 -4.5,-3.5" fill="none" stroke="#7f8fa8" stroke-width="0.8"/><path d="M2,-5.5 L7.5,-5.5 M4.75,-8.2 L4.75,-2.8" stroke="#4d6a9b" stroke-width="1.1"/></g><g transform="translate(873.5,90)" ><path d="M-6.5,-3 L-3.5,-5.5 L3,-4 L7,-2.5 L0.5,7 L-2.5,4.5Z" fill="#cfd7e4" stroke="#a3afc3" stroke-width="0.8"/><path d="M-8,-8 C-6,-7 -5,-5.5 -4.5,-3.5" fill="none" stroke="#7f8fa8" stroke-width="0.8"/><path d="M2.5,-7.5 L7,-3 M7,-7.5 L2.5,-3" stroke="#d8342c" stroke-width="1.1"/></g><g transform="translate(873.5,116)" ><path d="M-6.5,-3 L-3.5,-5.5 L3,-4 L7,-2.5 L0.5,7 L-2.5,4.5Z" fill="#cfd7e4" stroke="#a3afc3" stroke-width="0.8"/><path d="M-8,-8 C-6,-7 -5,-5.5 -4.5,-3.5" fill="none" stroke="#7f8fa8" stroke-width="0.8"/><path d="M0.5,-1 L6.5,-7" stroke="#234a84" stroke-width="1.9"/><path d="M-0.8,0.8 L0.5,-1" stroke="#234a84" stroke-width="0.8"/></g><g transform="translate(899,90)" ><path d="M-6.5,-3 L-3.5,-5.5 L3,-4 L7,-2.5 L0.5,7 L-2.5,4.5Z" fill="#cfd7e4" stroke="#a3afc3" stroke-width="0.8"/><path d="M-8,-8 C-6,-7 -5,-5.5 -4.5,-3.5" fill="none" stroke="#7f8fa8" stroke-width="0.8"/><path d="M-0.5,-4.5 C2,-7.5 6,-7.5 8.5,-4.5 C6,-1.5 2,-1.5 -0.5,-4.5Z" fill="#eef2f8" stroke="#6c82a8" stroke-width="0.7"/><circle cx="4" cy="-4.5" r="1.6" fill="#234a84"/></g><path d="M169.5,139 L169.5,132 L176.5,132" fill="none" stroke="#555" stroke-width="1"/><path d="M172,134.5 L176,138.5" stroke="#444" stroke-width="1"/><path d="M176.8,135.3 L176.8,139.3 L172.8,139.3Z" fill="#444"/><path d="M344.5,139 L344.5,132 L351.5,132" fill="none" stroke="#555" stroke-width="1"/><path d="M347,134.5 L351,138.5" stroke="#444" stroke-width="1"/><path d="M351.8,135.3 L351.8,139.3 L347.8,139.3Z" fill="#444"/><path d="M527.5,139 L527.5,132 L534.5,132" fill="none" stroke="#555" stroke-width="1"/><path d="M530,134.5 L534,138.5" stroke="#444" stroke-width="1"/><path d="M534.8,135.3 L534.8,139.3 L530.8,139.3Z" fill="#444"/><path d="M805.0,139 L805.0,132 L812.0,132" fill="none" stroke="#555" stroke-width="1"/><path d="M807.5,134.5 L811.5,138.5" stroke="#444" stroke-width="1"/><path d="M812.3,135.3 L812.3,139.3 L808.3,139.3Z" fill="#444"/><path d="M1749,74.5 L1749,81 M1734.5,97.5 L1740.5,95 M1758.5,95.5 L1765,98" stroke="#cfd6e2" stroke-width="0.7"/><path d="M1757,91.5 L1766,94.2 L1757,97.2Z" fill="#234a84"/><path d="M1740.2,83 L1748.9,80.5 L1758.5,83.5 L1758.5,95.2 L1750.4,99.8 L1740.2,94.7Z" fill="#fdfdfe" stroke="#8fa2c2" stroke-width="0.9" stroke-linejoin="round"/><path d="M1750.4,87 L1758.5,83.5 L1758.5,95.2 L1750.4,99.8Z" fill="#b9c0cd"/><path d="M1740.2,83 L1750.4,87 L1758.5,83.5" fill="none" stroke="#8fa2c2" stroke-width="0.8"/><path d="M1750.4,87 L1750.4,99.8" stroke="#4f6fa3" stroke-width="0.9"/><g transform="translate(1782.5,72)" ><path d="M-1.5,1.5 L4.5,-6.5 L8,-4 L1.5,4Z" fill="#234a84"/><path d="M-3.5,2 L0,5.5 L-2,7.5 L-5.5,4Z" fill="#fff" stroke="#8fa0bc" stroke-width="0.6"/><path d="M-1,0.5 L2.5,3.2" stroke="#fff" stroke-width="0.7"/><text x="-8.5" y="7" font-family="Liberation Sans, sans-serif" font-size="5.5" font-weight="bold" fill="#234a84">3D</text></g><g transform="translate(1782.5,108)" ><circle cx="0" cy="1.8" r="6.8" fill="#f2f6fb" stroke="#c5d1e2" stroke-width="0.7"/><path d="M-6.2,-0.8 A6.6,6.6 0 0 1 2.6,-4.8" fill="none" stroke="#234a84" stroke-width="1.3"/><path d="M1.3,-7.9 L6.2,-4.5 L1,-1.8Z" fill="#234a84"/><text x="-7.3" y="7" font-family="Liberation Sans, sans-serif" font-size="10" font-weight="bold" fill="#234a84" stroke="#fff" stroke-width="1.4" paint-order="stroke" letter-spacing="-0.5">3D</text></g><g transform="translate(1824,69.5)" ><path d="M9.5,-9 A13,13 0 1 0 12.5,3.5" fill="none" stroke="#222" stroke-width="1.1"/><path d="M7,-11.5 L14,-10.5 L11,-4.5Z" fill="#222"/><g transform="scale(0.66)"><circle cx="-4.6" cy="-4.6" r="5.3" fill="none" stroke="#3a9bdc" stroke-width="3.3"/><circle cx="4.6" cy="-4.6" r="5.3" fill="none" stroke="#d9453c" stroke-width="3.3"/><circle cx="4.6" cy="4.6" r="5.3" fill="none" stroke="#5cb85c" stroke-width="3.3"/><circle cx="-4.6" cy="4.6" r="5.3" fill="none" stroke="#e8c14e" stroke-width="3.3"/><path d="M-8.3,-0.9 A5.3,5.3 0 0 1 -0.9,-8.3" fill="none" stroke="#3a9bdc" stroke-width="3.3"/><path d="M-2,-1.8 L2.2,2.4" stroke="#3a78b8" stroke-width="2.6"/></g></g><g transform="translate(1862,72.5)" ><g transform="scale(0.98)"><circle cx="-4.6" cy="-4.6" r="5.3" fill="none" stroke="#3a9bdc" stroke-width="3.3"/><circle cx="4.6" cy="-4.6" r="5.3" fill="none" stroke="#d9453c" stroke-width="3.3"/><circle cx="4.6" cy="4.6" r="5.3" fill="none" stroke="#5cb85c" stroke-width="3.3"/><circle cx="-4.6" cy="4.6" r="5.3" fill="none" stroke="#e8c14e" stroke-width="3.3"/><path d="M-8.3,-0.9 A5.3,5.3 0 0 1 -0.9,-8.3" fill="none" stroke="#3a9bdc" stroke-width="3.3"/><path d="M-2,-1.8 L2.2,2.4" stroke="#3a78b8" stroke-width="2.6"/></g><path d="M5,-7 C5.5,-12.5 9,-14.5 12.5,-14.5 L12.5,-18 L18.5,-13 L12.5,-8 L12.5,-11.3 C10,-11.3 7,-10.5 5,-7Z" fill="#222"/></g><g transform="translate(1903,73.5)" ><path d="M0,-2.5 L-6.5,-2.5 L-6.5,7 L3.5,7 L3.5,3" fill="none" stroke="#3c5d92" stroke-width="1.3"/><path d="M7.5,-8.5 C7.5,-3.5 4.5,-2.3 1,-2.3 L1,0.3 L-4,-3.5 L1,-7.3 L1,-4.8 C4,-4.8 6.5,-5.5 7.5,-8.5Z" fill="#234a84"/></g><g transform="translate(1903,108)" ><path d="M-1,-2.5 L-6.5,-2.5 L-6.5,7 L3.5,7 L3.5,3" fill="none" stroke="#3c5d92" stroke-width="1.3"/><path d="M-3,3 C-3,-2 0,-4.3 3,-4.3 L3,-7 L8,-3 L3,1 L3,-1.7 C0.5,-1.7 -2,-0.5 -3,3Z" fill="#234a84"/></g><rect x="1540.5" y="27.5" width="23" height="22" fill="#dbe9f5" stroke="#c5daec" stroke-width="1"/><rect x="1447" y="28" width="1" height="21" fill="#b5b5b5"/><rect x="1534" y="28" width="1" height="21" fill="#b5b5b5"/><rect x="1829" y="28" width="1" height="21" fill="#b5b5b5"/><rect x="1863" y="28" width="1" height="21" fill="#b5b5b5"/><g transform="translate(1248,38)" ><circle cx="1" cy="-2" r="4.6" fill="#fff" stroke="#222" stroke-width="1.2"/><path d="M4.311999999999999,1.3119999999999998 L9.399999999999999,6.3999999999999995" stroke="#111" stroke-width="2"/><path d="M-3,-6 C-6,-4 -6.5,0 -4.5,3" fill="none" stroke="#1a34c8" stroke-width="1.8"/><path d="M-8,2 L-1.5,2.5 L-4.5,8Z" fill="#1a34c8"/></g><g transform="translate(1274,38)" ><circle cx="-0.5" cy="-1" r="5.8" fill="#fff" stroke="#222" stroke-width="1.2"/><path d="M3.676,3.176 L9.1,8.6" stroke="#111" stroke-width="2"/><path d="M-0.5,-5.5 L-0.5,3.5 M-5,-1 L4,-1" stroke="#1a34c8" stroke-width="1.2"/><path d="M-0.5,-6.3 L1.2,-4 L-2.2,-4Z M-0.5,4.3 L1.2,2 L-2.2,2Z M-5.8,-1 L-3.5,-2.7 L-3.5,0.7Z M4.8,-1 L2.5,-2.7 L2.5,0.7Z" fill="#1a34c8"/></g><g transform="translate(1300,38)" ><circle cx="-0.5" cy="-1" r="5.8" fill="#fff" stroke="#222" stroke-width="1.2"/><path d="M3.676,3.176 L9.1,8.6" stroke="#111" stroke-width="2"/><text x="-4.6" y="1.6" font-family="Liberation Sans, sans-serif" font-size="7" fill="#1a34c8">×2</text></g><g transform="translate(1326,38)" ><path d="M3.5,-5.5 A6,6 0 1 0 5,2.5" fill="none" stroke="#1a34c8" stroke-width="1.4"/><path d="M1.5,-8.5 L7.5,-7.5 L6.5,-2Z" fill="#1a34c8"/><path d="M-8,8 L2,8" stroke="#333" stroke-width="0.9"/><path d="M-1,6.5 L5.5,0.5 L8,3 L1.5,9 L-1.5,9.5Z" fill="#e8c84a" stroke="#6b4a10" stroke-width="0.7"/><path d="M5.5,0.5 L8,3 L9,2 L6.5,-0.5Z" fill="#d8342c"/></g><g transform="translate(1352,38)" ><rect x="-7" y="-2" width="8.5" height="8.5" fill="none" stroke="#2a3cc0" stroke-width="1" stroke-dasharray="1.2,1.2"/><circle cx="0.5" cy="-2.5" r="4.4" fill="#fff" stroke="#222" stroke-width="1.2"/><path d="M3.668,0.6680000000000001 L8.7,5.7" stroke="#111" stroke-width="2"/></g><g transform="translate(1378,38)" ><path d="M-3.2,1 L-3.2,-5 A1,1 0 0 1 -1.3,-5 L-1.3,-6.5 A1,1 0 0 1 0.7,-6.5 L0.7,-5.8 A1,1 0 0 1 2.7,-5.8 L2.7,-4.5 A0.9,0.9 0 0 1 4.5,-4.5 L4.5,3 C4.5,6 3,8 0.5,8 C-2,8 -3,7 -4.2,4.5 L-6.3,0.5 C-6.6,-0.8 -5,-1.3 -4.2,-0.2Z" fill="#fff" stroke="#222" stroke-width="0.9"/><path d="M-1.3,-5 L-1.3,0 M0.7,-5.8 L0.7,0 M2.7,-4.5 L2.7,0" stroke="#222" stroke-width="0.7"/></g><g transform="translate(1404,38)" ><ellipse rx="7" ry="3.6" fill="none" stroke="#333" stroke-width="0.9" transform="rotate(45)"/><ellipse rx="7" ry="3.6" fill="none" stroke="#333" stroke-width="0.9" transform="rotate(-45)"/><path d="M-1,-8 L1.5,-6.5 L-1,-5Z M1,8 L-1.5,6.5 L1,5Z" fill="#333"/></g><g transform="translate(1430,38)" ><rect x="-7.5" y="-7.5" width="11.5" height="8.5" fill="#fff" stroke="#333" stroke-width="0.8"/><rect x="-7.5" y="-7.5" width="11.5" height="2.2" fill="#58b8e8"/><rect x="-2.5" y="-0.5" width="10" height="8.5" fill="#fff" stroke="#333" stroke-width="0.8"/><path d="M-5,-2.5 L3,4.5" stroke="#1a34c8" stroke-width="1.8"/><path d="M5.5,7 L0,5.5 L4.2,1.5Z" fill="#1a34c8"/></g><g transform="translate(1465,38)" ><path d="M-7,-6.5 L4.5,-6.5 L7,-4 L7,6.5 L-7,6.5Z" fill="#fff" stroke="#222" stroke-width="0.9"/><text x="-6.3" y="-0.6" font-family="Liberation Sans, sans-serif" font-size="5.6" font-weight="bold" fill="#111" letter-spacing="-0.3">DXF</text><text x="-6.5" y="5" font-family="Liberation Sans, sans-serif" font-size="5.6" font-weight="bold" fill="#111" letter-spacing="-0.5">DWG</text></g><g transform="translate(1491,38)" ><text x="-8.5" y="-2" font-family="Liberation Sans, sans-serif" font-size="5.8" font-weight="bold" fill="#8a1020" letter-spacing="-0.3">DXF</text><text x="-8.5" y="8" font-family="Liberation Sans, sans-serif" font-size="5.8" font-weight="bold" fill="#8a1020" letter-spacing="-0.5">DWG</text><path d="M-6,1 L0,1" stroke="#d8342c" stroke-width="0.9"/><path d="M0,-0.5 L2.5,1 L0,2.5Z" fill="#d8342c"/><path d="M2.5,-7 L8,-7 M2.5,-4.5 L8,-4.5 M2.5,-2 L8,-2 M2.5,0.5 L8,0.5 M2.5,3 L8,3 M2.5,5.5 L8,5.5 M2.5,8 L8,8" stroke="#222" stroke-width="1.2"/><path d="M3,-7.5 L3,8.5" stroke="#222" stroke-width="0.9"/></g><g transform="translate(1517,38.5)" ><path d="M-5.8,7 L-5.8,-0.5 A5.8,5.8 0 0 1 5.8,-0.5 L5.8,7 L2.4,7 L2.4,-0.5 A2.4,2.4 0 0 0 -2.4,-0.5 L-2.4,7Z" fill="#d01818" stroke="#5a0808" stroke-width="0.7"/><rect x="-5.8" y="4.5" width="3.4" height="2.5" fill="#e8e8e8" stroke="#5a0808" stroke-width="0.5"/><rect x="2.4" y="4.5" width="3.4" height="2.5" fill="#e8e8e8" stroke="#5a0808" stroke-width="0.5"/></g><rect x="1546.5" y="33" width="11" height="11" fill="#f4f4f4" stroke="#1a1a1a" stroke-width="2"/><g transform="translate(1578,38)" ><path d="M-3,-7.5 L-3,7.5 M3,-7.5 L3,7.5 M-7.5,-3 L7.5,-3 M-7.5,3 L7.5,3" stroke="#444" stroke-width="1"/></g><g transform="translate(1604,38)" ><rect x="-3" y="-3" width="6" height="6" fill="none" stroke="#333" stroke-width="0.9"/><rect x="-0.7" y="-0.7" width="1.4" height="1.4" fill="#333"/><rect x="-6.5" y="-6.5" width="13" height="13" fill="none" stroke="#555" stroke-width="1" stroke-dasharray="1,3.3"/></g><g transform="translate(1630,38)" ><rect x="-8" y="-4.5" width="16" height="9" rx="1" fill="#333"/><path d="M-6.5,-2.7 L6.5,-2.7 M-6.5,-0.6 L6.5,-0.6" stroke="#eee" stroke-width="1" stroke-dasharray="1.2,0.9"/><path d="M-4.5,2.3 L4.5,2.3" stroke="#eee" stroke-width="1"/></g><g transform="translate(1656,38)" ><rect x="-7.5" y="-7" width="15" height="8.5" fill="#fff" stroke="#333" stroke-width="0.8"/><text x="-6.2" y="-0.2" font-family="Liberation Sans, sans-serif" font-size="6.5" font-weight="bold" fill="#222" letter-spacing="-0.2">1.00</text><path d="M-7.5,5.5 L7.5,5.5 M-7.5,3.5 L-7.5,7.5 M7.5,3.5 L7.5,7.5" stroke="#333" stroke-width="0.9"/></g><g transform="translate(1681,38)" ><path d="M-5,-8 L-5,5 L8,5 M-8,-5 L5,-5 L5,8" fill="none" stroke="#333" stroke-width="1.2"/><path d="M-5,-9 L-3.3,-6.5 L-6.7,-6.5Z M9,5 L6.5,3.3 L6.5,6.7Z" fill="#333"/><path d="M9.5,0 L11.5,0 L10.5,1.3Z" fill="#555"/></g><g transform="translate(1708,38)" ><path d="M-3.5,-7 L-3.5,6 M-7.5,6 L7,6" stroke="#333" stroke-width="1.2"/><path d="M-3.5,-1.5 A7.5,7.5 0 0 1 4,6" fill="none" stroke="#333" stroke-width="0.9"/><circle cx="0" cy="2.8" r="0.8" fill="#333"/></g><g transform="translate(1734,38)" ><circle r="6.3" fill="none" stroke="#777" stroke-width="1.1"/><path d="M0,0 L7.5,0 M0,0 L5.5,-6" stroke="#777" stroke-width="0.9"/></g><g transform="translate(1760,38)" ><rect x="-6.5" y="-4" width="13" height="11.5" fill="none" stroke="#222" stroke-width="1.2" stroke-dasharray="1.3,1.3"/><rect x="-7.5" y="-8.5" width="3" height="2.5" fill="none" stroke="#222" stroke-width="0.8"/><rect x="0.5" y="-8.5" width="4.5" height="2.5" fill="none" stroke="#222" stroke-width="0.8"/><path d="M-3,-1 L1,-1 L1,3" fill="none" stroke="#d8342c" stroke-width="0.9"/><rect x="-4" y="-2" width="2" height="2" fill="#f0c040" stroke="#d8342c" stroke-width="0.5"/><rect x="0" y="2.5" width="2" height="2" fill="#f0c040" stroke="#d8342c" stroke-width="0.5"/></g><g transform="translate(1786,38)" ><path d="M-7,-5.5 L7,-5.5 L7,3.5 L-2,3.5 L-6.5,7.5 L-5.5,3.5 L-7,3.5Z" fill="#f8f8f8" stroke="#333" stroke-width="1.1"/></g><g transform="translate(1812,38)" ><path d="M-4.5,-4.5 L6.5,6.5" stroke="#3a3a3a" stroke-width="1.5"/><path d="M-7.5,-5 A3,3 0 0 0 -3.2,-2.8 L-2.8,-3.2 A3,3 0 0 0 -5,-7.5 L-4.2,-5.2 L-5.2,-4.2Z" fill="#3a3a3a"/><path d="M5,5 L7.8,7.8" stroke="#3a3a3a" stroke-width="2.4" stroke-linecap="round"/><path d="M7,-7 L-2.5,2.5" stroke="#3a3a3a" stroke-width="1.1"/><path d="M-2.5,2.5 L-7,7" stroke="#3a3a3a" stroke-width="2.6" stroke-linecap="round"/><path d="M5.2,-7.8 L7.8,-5.2 L8.2,-8.2Z" fill="#3a3a3a"/></g><g transform="translate(1846,38)" ><rect x="-7.5" y="-7.5" width="4.5" height="15" fill="#fff" stroke="#111" stroke-width="1.5"/><rect x="-0.5" y="-7.5" width="8" height="6.5" fill="#fff" stroke="#111" stroke-width="1.5"/><rect x="-0.5" y="2" width="8" height="5.5" fill="#fff" stroke="#111" stroke-width="1.5"/><path d="M9.5,0 L11.5,0 L10.5,1.3Z" fill="#555"/></g><defs><radialGradient id="gg" cx="0.35" cy="0.3" r="0.8"><stop offset="0" stop-color="#bfe3ff"/><stop offset="0.45" stop-color="#2f7fe0"/><stop offset="1" stop-color="#0a2a90"/></radialGradient></defs><g transform="translate(1880,38)" ><circle r="7.8" fill="url(#gg)"/><path d="M-4,-3 C-2,-5 1,-4 0,-1.5 C-1,0.5 -3.5,0 -4,-3Z M1,2 C3,0.5 5,2 4,4.5 C3,6 1,5 1,2Z" fill="#8fd0ff" opacity="0.7"/><path d="M9.5,0 L11.5,0 L10.5,1.3Z" fill="#555"/></g><g transform="translate(1905,38)" ><path d="M-8,0.5 L0.5,-7.5 L8.5,-2.5 L0,6Z" fill="#6a1a78" stroke="#3a0a48" stroke-width="0.7"/><path d="M-8,0.5 L0,6 L8.5,-2.5 L8.5,0.5 L0,9 L-8,3.5Z" fill="#f0e8d0" stroke="#3a0a48" stroke-width="0.7"/><path d="M-8,3.5 L0,9 L8.5,0.5" fill="none" stroke="#a01828" stroke-width="1.1"/><text x="-1.8" y="1.8" font-family="Liberation Sans, sans-serif" font-size="7" font-weight="bold" fill="#f0c040" transform="rotate(20)">?</text><path d="M10.5,0 L12.5,0 L11.5,1.3Z" fill="#555"/></g><rect x="1766" y="170" width="1" height="22" fill="#c8c8c8"/><rect x="1892" y="170" width="1" height="22" fill="#c8c8c8"/><g transform="translate(1679.5,181)" ><path d="M0,-7 L0,1.5 L-6.5,7 M0,1.5 L7,5.5" fill="none" stroke="#6a6a6a" stroke-width="1"/></g><g transform="translate(1704,181)" ><path d="M-6.5,-3.5 L-3.5,-6.5 L6.5,-6.5 L6.5,3.5 L3.5,6.5 L-6.5,6.5Z" fill="#c8dcf0" stroke="#111" stroke-width="1.2" stroke-linejoin="round"/><path d="M-6.5,-3.5 L3.5,-3.5 L6.5,-6.5 M3.5,-3.5 L3.5,6.5" fill="none" stroke="#111" stroke-width="1.2"/></g><g transform="translate(1728,181)" ><ellipse cx="0" cy="1" rx="7.5" ry="3.6" fill="none" stroke="#222" stroke-width="1"/><circle cx="-0.5" cy="-1.8" r="3.4" fill="#111"/><path d="M1,6.5 L4,3.5 L5,7.5Z" fill="#222"/></g><g transform="translate(1752,181)" ><ellipse cx="0" cy="2" rx="7.5" ry="3.3" fill="none" stroke="#222" stroke-width="1.1"/><path d="M0,-4 L0,6.5" stroke="#222" stroke-width="1.2"/><circle cx="0" cy="-5.5" r="1.8" fill="#fff" stroke="#222" stroke-width="1"/><path d="M2,6.8 L5,4 L5.5,7.5Z" fill="#222"/></g><g transform="translate(1782,181)" ><rect x="-6" y="-5.5" width="6" height="11" fill="#c8dcf0"/><rect x="0" y="-5.5" width="5" height="11" fill="#f0c0c0"/><path d="M-6,-5.5 L-6,5.5 M-6.5,-5.5 L6,-5.5 M-6.5,5.5 L6,5.5" stroke="#111" stroke-width="1.2" fill="none"/><path d="M5.5,-6 L5.5,6" stroke="#d01818" stroke-width="1.6"/><path d="M0,-7.5 L0,7.5" stroke="#111" stroke-width="1" stroke-dasharray="1.6,1.2"/></g><g transform="translate(1806,181)" ><path d="M-6,-6 L6,-6 L-6,6Z" fill="#58e070"/><path d="M6,-6 L6,6 L-6,6Z" fill="#c8dcf0"/><rect x="-6" y="-6" width="12" height="12" fill="none" stroke="#111" stroke-width="1.1"/><path d="M-7.5,7.5 L7.5,-7.5" stroke="#111" stroke-width="1"/></g><g transform="translate(1830,181)" ><rect x="-6" y="-6" width="12" height="6" fill="#e0c8f0"/><rect x="-6" y="0" width="12" height="6" fill="#c8dcf0"/><rect x="-6" y="-6" width="12" height="12" fill="none" stroke="#111" stroke-width="1.1"/><path d="M-7.5,0 L7.5,0" stroke="#111" stroke-width="1" stroke-dasharray="1.6,1.2"/></g><g transform="translate(1854,181)" ><path d="M-7,-3.5 L0,-7 L7,-3.5 L7,4 L0,7.5 L-7,4Z" fill="#c8d4e8" stroke="#4a5a78" stroke-width="0.9"/><path d="M-7,-3.5 L0,0 L7,-3.5 L0,-7Z" fill="#f0b0b0"/><path d="M0,0 L7,-3.5 L7,0.3 L0,3.8Z" fill="#88c070"/><path d="M-7,-3.5 L0,0 L0,3.8 L-7,0.3Z" fill="#a8b8d4"/><path d="M-7,0.3 L0,3.8 L7,0.3 M0,0 L0,7.5 M-7,-3.5 L0,0 L7,-3.5" fill="none" stroke="#4a5a78" stroke-width="0.7"/></g><g transform="translate(1878,181)" ><path d="M-8,0 C-4,-6 4,-6 8,0 C4,6 -4,6 -8,0Z" fill="#111"/><circle r="3" fill="#111" stroke="#fff" stroke-width="0.9"/><path d="M-6,7 L6.5,-7.5" stroke="#111" stroke-width="1"/></g><g transform="translate(1908,181)" ><text x="-7" y="-0.5" font-family="Liberation Sans, sans-serif" font-size="8.5" font-weight="bold" fill="#222" letter-spacing="-0.3">3D</text><circle cx="1.5" cy="4.5" r="3" fill="none" stroke="#666" stroke-width="1.1" stroke-dasharray="1.4,1"/><circle cx="1.5" cy="4.5" r="1" fill="none" stroke="#666" stroke-width="0.6"/></g><path d="M251.4,152.0 L256,157.0 L260.6,152.0" fill="none" stroke="#111" stroke-width="1.9"/><path d="M271.8,150.0 L280.8,159.0 M280.8,150.0 L271.8,159.0" stroke="#111" stroke-width="1.5"/><path d="M251.4,281.0 L256,286.0 L260.6,281.0" fill="none" stroke="#111" stroke-width="1.9"/><path d="M271.8,279.0 L280.8,288.0 M280.8,279.0 L271.8,288.0" stroke="#111" stroke-width="1.5"/><path d="M251.4,375.0 L256,380.0 L260.6,375.0" fill="none" stroke="#111" stroke-width="1.9"/><path d="M271.8,373.0 L280.8,382.0 M280.8,373.0 L271.8,382.0" stroke="#111" stroke-width="1.5"/><path d="M251.4,567.0 L256,572.0 L260.6,567.0" fill="none" stroke="#111" stroke-width="1.9"/><path d="M271.8,565.0 L280.8,574.0 M280.8,565.0 L271.8,574.0" stroke="#111" stroke-width="1.5"/><path d="M251.4,804.0 L256,809.0 L260.6,804.0" fill="none" stroke="#111" stroke-width="1.9"/><path d="M271.8,802.0 L280.8,811.0 M280.8,802.0 L271.8,811.0" stroke="#111" stroke-width="1.5"/><g transform="translate(12.5,181.5)" ><path d="M-8.5,-4 L-8.5,-7 L-5.5,-7 M5.5,-7 L8.5,-7 L8.5,-4 M8.5,5 L8.5,8 L5.5,8 M-5.5,8 L-8.5,8 L-8.5,5" fill="none" stroke="#7f93b5" stroke-width="0.9"/><path d="M-6,-2.8 L0,-6 L6,-2.8 L6,3.8 L0,7 L-6,3.8Z" fill="#f6f8fc" stroke="#3c5d92" stroke-width="1.1"/><path d="M0,0.5 L6,-2.8 L6,3.8 L0,7Z" fill="#98a8c2"/><path d="M-6,-2.8 L0,0.5 L0,7 L-6,3.8Z" fill="#e3e9f2"/><path d="M-6,-2.8 L0,0.5 L6,-2.8 M0,0.5 L0,7" fill="none" stroke="#3c5d92" stroke-width="1"/><path d="M6,-7 L12,-7 M9,-10 L9,-4" stroke="#234a84" stroke-width="1.3"/></g><g transform="translate(43.5,181.5)" ><path d="M-8.5,-4 L-8.5,-7 L-5.5,-7 M5.5,-7 L8.5,-7 L8.5,-4 M8.5,5 L8.5,8 L5.5,8 M-5.5,8 L-8.5,8 L-8.5,5" fill="none" stroke="#7f93b5" stroke-width="0.9"/><path d="M-6,-2.8 L0,-6 L6,-2.8 L6,3.8 L0,7 L-6,3.8Z" fill="#f6f8fc" stroke="#3c5d92" stroke-width="1.1"/><path d="M0,0.5 L6,-2.8 L6,3.8 L0,7Z" fill="#98a8c2"/><path d="M-6,-2.8 L0,0.5 L0,7 L-6,3.8Z" fill="#e3e9f2"/><path d="M-6,-2.8 L0,0.5 L6,-2.8 M0,0.5 L0,7" fill="none" stroke="#3c5d92" stroke-width="1"/><path d="M2.5,-2.5 L8.5,-9" stroke="#234a84" stroke-width="2.2"/><path d="M1,-0.8 L2.8,-2.8" stroke="#234a84" stroke-width="0.9"/></g><g transform="translate(74.5,181.5)" ><path d="M-8.5,-4 L-8.5,-7 L-5.5,-7 M5.5,-7 L8.5,-7 L8.5,-4 M8.5,5 L8.5,8 L5.5,8 M-5.5,8 L-8.5,8 L-8.5,5" fill="none" stroke="#7f93b5" stroke-width="0.9"/><path d="M-6,-2.8 L0,-6 L6,-2.8 L6,3.8 L0,7 L-6,3.8Z" fill="#f6f8fc" stroke="#3c5d92" stroke-width="1.1"/><path d="M0,0.5 L6,-2.8 L6,3.8 L0,7Z" fill="#98a8c2"/><path d="M-6,-2.8 L0,0.5 L0,7 L-6,3.8Z" fill="#e3e9f2"/><path d="M-6,-2.8 L0,0.5 L6,-2.8 M0,0.5 L0,7" fill="none" stroke="#3c5d92" stroke-width="1"/><path d="M1.5,-8.5 L7.5,-8.5 L7.5,1.5 L1.5,1.5Z" fill="#f4f7fb" stroke="#8a9cba" stroke-width="0.8"/><path d="M4,-11 L9.5,-11 L12,-8.5 L12,-1 L4,-1Z" fill="#fff" stroke="#8a9cba" stroke-width="0.8"/></g><g transform="translate(105.5,181.5)" ><path d="M-8.5,-4 L-8.5,-7 L-5.5,-7 M5.5,-7 L8.5,-7 L8.5,-4 M8.5,5 L8.5,8 L5.5,8 M-5.5,8 L-8.5,8 L-8.5,5" fill="none" stroke="#7f93b5" stroke-width="0.9"/><path d="M-6,-2.8 L0,-6 L6,-2.8 L6,3.8 L0,7 L-6,3.8Z" fill="#f6f8fc" stroke="#3c5d92" stroke-width="1.1"/><path d="M0,0.5 L6,-2.8 L6,3.8 L0,7Z" fill="#98a8c2"/><path d="M-6,-2.8 L0,0.5 L0,7 L-6,3.8Z" fill="#e3e9f2"/><path d="M-6,-2.8 L0,0.5 L6,-2.8 M0,0.5 L0,7" fill="none" stroke="#3c5d92" stroke-width="1"/><path d="M5,-9.5 L11,-3.5 M11,-9.5 L5,-3.5" stroke="#e01828" stroke-width="1.5"/></g><g transform="translate(143.5,174)" ><g opacity="1"><path d="M-7.5,0 C-4,-4.5 4,-4.5 7.5,0 C4,4.5 -4,4.5 -7.5,0Z" fill="#f4f8fc" stroke="#234a84" stroke-width="0.9"/><circle cx="0.3" r="3.2" fill="none" stroke="#234a84" stroke-width="1"/><path d="M2.3,-1.4 A2,2 0 1 0 2.3,1.6" fill="none" stroke="#234a84" stroke-width="0.9"/></g><circle cx="0.3" r="1.5" fill="#234a84"/></g><path d="M138.8,180.3 L147.5,186.5 L130.5,186.5Z" fill="#c5cbd6"/><path d="M129,187 L149,187" stroke="#3c5d92" stroke-width="1.1"/><path d="M138.8,180.3 L147.5,186.5 M138.8,180.3 L130.5,186.5" stroke="#8a9cba" stroke-width="0.8"/><rect x="158" y="167" width="1" height="26" fill="#c8c8c8"/><rect x="228" y="167" width="1" height="26" fill="#c8c8c8"/><g transform="translate(178,181)" ><path d="M-9.5,-4 L-5,-4 L-3.5,-6.8 L3.5,-6.8 L5,-4 L9.5,-4 L9.5,6.5 L-9.5,6.5Z" fill="#f4f7fb" stroke="#5675a6" stroke-width="0.9" stroke-linejoin="round"/><circle cx="0" cy="1" r="4.6" fill="none" stroke="#5675a6" stroke-width="0.8"/><circle cx="0" cy="1" r="3" fill="none" stroke="#5675a6" stroke-width="0.7"/></g><g transform="translate(209.5,180)" ><path d="M-9.5,-4 L-5,-4 L-3.5,-6.8 L3.5,-6.8 L5,-4 L9.5,-4 L9.5,6.5 L-9.5,6.5Z" fill="#f4f7fb" stroke="#5675a6" stroke-width="0.9" stroke-linejoin="round"/><circle cx="0" cy="1" r="4.6" fill="none" stroke="#5675a6" stroke-width="0.8"/><circle cx="0" cy="1" r="3" fill="none" stroke="#5675a6" stroke-width="0.7"/><g transform="translate(-7,7.5)" ><path d="M-3.5,2.5 C-3.5,-1 -1,-2 1,-2 L1,-4 L5,-0.8 L1,2.4 L1,0.4 C-0.5,0.4 -2.5,0.8 -3.5,2.5Z" fill="#234a84"/></g></g><g transform="translate(248,180.5)" ><path d="M-9,-7 L-1.5,-2.5 L-1.5,9 L-9,4.5Z" fill="#7f96ba" stroke="#3c5d92" stroke-width="0.9"/><path d="M-6.5,-5.5 L-6.5,6 M-4,-4 L-4,7.5 M-9,-3 L-1.5,1.5 M-9,1 L-1.5,5.5" stroke="#b9c7dd" stroke-width="0.6"/><path d="M-1.5,-2.5 L4,-5.5 L8.5,-3 L8.5,4 L-1.5,9Z" fill="#fafbfc" stroke="#aab4c6" stroke-width="0.7"/><path d="M-1.5,3 L8.5,-1.5 L8.5,4 L-1.5,9Z" fill="#cfd4de"/></g><g clip-path="url(#clipv)"><g transform="translate(279,180.5)" ><path d="M-9,-7 L-1.5,-2.5 L-1.5,9 L-9,4.5Z" fill="#7f96ba" stroke="#3c5d92" stroke-width="0.9"/><path d="M-6.5,-5.5 L-6.5,6 M-4,-4 L-4,7.5 M-9,-3 L-1.5,1.5 M-9,1 L-1.5,5.5" stroke="#b9c7dd" stroke-width="0.6"/><path d="M-1.5,-2.5 L4,-5.5 L8.5,-3 L8.5,4 L-1.5,9Z" fill="#fafbfc" stroke="#aab4c6" stroke-width="0.7"/><path d="M-1.5,3 L8.5,-1.5 L8.5,4 L-1.5,9Z" fill="#cfd4de"/><g transform="translate(-7,7)" ><path d="M-3.5,2.5 C-3.5,-1 -1,-2 1,-2 L1,-4 L5,-0.8 L1,2.4 L1,0.4 C-0.5,0.4 -2.5,0.8 -3.5,2.5Z" fill="#2a5aa0"/></g></g></g><path d="M11.0,201 L16.0,206 L11.0,211" fill="none" stroke="#666" stroke-width="1.6"/><path d="M9.3,224.0 L13.5,229.0 L17.7,224.0" fill="none" stroke="#222" stroke-width="1.8"/><g transform="translate(12.5,306)" ><rect x="-4" y="-8.5" width="8.5" height="12" fill="#dfe8f4" stroke="#8a9cba" stroke-width="0.8"/><path d="M-2.5,-5.5 L-0.8,-5.5 M1,-5.5 L2.7,-5.5 M-2.5,-2.5 L-0.8,-2.5 M1,-2.5 L2.7,-2.5" stroke="#1b3563" stroke-width="1.8"/><path d="M-6.5,0 L-6.5,7" stroke="#58b868" stroke-width="1.2" stroke-dasharray="1.5,1"/><circle cx="2.8" cy="3.8" r="4.3" fill="#1b3563"/><path d="M0.2,3.8 L5.4,3.8 M2.8,1.2 L2.8,6.4" stroke="#d6e6f8" stroke-width="1.8"/></g><g transform="translate(37,306)" ><path d="M-7,-3.5 L-0.5,-7 L6,-3.5 L-0.5,0Z M-7,-0.5 L-0.5,3 L2,1.7 M-7,2.5 L-0.5,6 L0,5.7" fill="#f4f7fb" stroke="#8a9cba" stroke-width="0.9"/><circle cx="3.8" cy="3.8" r="4.3" fill="#1b3563"/><path d="M1.2,3.8 L6.4,3.8 M3.8,1.2 L3.8,6.4" stroke="#d6e6f8" stroke-width="1.8"/></g><g transform="translate(62.5,305.5)" ><g transform="rotate(45)"><rect x="-2.6" y="-9.5" width="5.2" height="13" rx="1" fill="#6cabea"/><rect x="-2.6" y="-9.5" width="5.2" height="2.6" rx="1" fill="#f4f8fc" stroke="#6cabea" stroke-width="0.6"/><path d="M-2.6,3.5 L0,8.6 L2.6,3.5Z" fill="#f4f7fb"/><path d="M-1.4,5.8 L0,8.6 L1.4,5.8Z" fill="#234a84"/></g></g><path d="M81.5,300.5 L92.5,311.5 M92.5,300.5 L81.5,311.5" stroke="#cacaca" stroke-width="2.6"/><path d="M105,310 L112,302.5 L119,310Z" fill="#a8a8a8"/><path d="M130,302.5 L144,302.5 L137,309.5Z" fill="#a8a8a8"/><rect x="153" y="295" width="1" height="22" fill="#c8c8c8"/><rect x="236" y="295" width="1" height="22" fill="#c8c8c8"/><g transform="translate(169,306)" ><path d="M0.5,0 L4.8,-6.3" stroke="#234a84" stroke-width="2.5" stroke-linecap="round"/><ellipse cx="-0.3" cy="2.6" rx="5" ry="3.5" fill="#234a84" transform="rotate(-38 -0.3 2.6)"/><path d="M-4.8,-3 L-2.5,1.5" stroke="#234a84" stroke-width="2.1" stroke-linecap="round"/><path d="M3.2,-0.8 L5.2,0 M3.6,1.6 L5.4,2.4" stroke="#234a84" stroke-width="1.6" stroke-linecap="round"/></g><g transform="translate(194,306)" ><path d="M0.5,0 L4.8,-6.3" stroke="#e0443c" stroke-width="2.5" stroke-linecap="round"/><ellipse cx="-0.3" cy="2.6" rx="5" ry="3.5" fill="#e0443c" transform="rotate(-38 -0.3 2.6)"/><path d="M-4.8,-3 L-2.5,1.5" stroke="#e0443c" stroke-width="2.1" stroke-linecap="round"/><path d="M3.2,-0.8 L5.2,0 M3.6,1.6 L5.4,2.4" stroke="#e0443c" stroke-width="1.6" stroke-linecap="round"/></g><g transform="translate(219.8,306.5)" ><circle cx="0" cy="-5.8" r="1.5" fill="#fff" stroke="#234a84" stroke-width="1.1"/><rect x="-1.6" y="-2.5" width="3.2" height="9" rx="1.4" fill="#e6edf6" stroke="#234a84" stroke-width="1.1"/></g><path d="M247,312 L256,303" stroke="#234a84" stroke-width="1.3"/><g transform="translate(257,302)" ><path d="M0,-3 L0.8,-0.8 L3,0 L0.8,0.8 L0,3 L-0.8,0.8 L-3,0 L-0.8,-0.8Z" fill="#234a84"/></g><path d="M9.3,326.0 L13.5,331.0 L17.7,326.0" fill="none" stroke="#222" stroke-width="1.8"/><g transform="translate(255,328)" ><g opacity="1"><path d="M-7.5,0 C-4,-4.5 4,-4.5 7.5,0 C4,4.5 -4,4.5 -7.5,0Z" fill="#f4f8fc" stroke="#3c5d92" stroke-width="0.9"/><circle cx="0.3" r="3.2" fill="none" stroke="#3c5d92" stroke-width="1"/><path d="M2.3,-1.4 A2,2 0 1 0 2.3,1.6" fill="none" stroke="#3c5d92" stroke-width="0.9"/></g></g><g transform="translate(255,348)" ><g opacity="1"><path d="M-7.5,0 C-4,-4.5 4,-4.5 7.5,0 C4,4.5 -4,4.5 -7.5,0Z" fill="#f4f8fc" stroke="#3c5d92" stroke-width="0.9"/><circle cx="0.3" r="3.2" fill="none" stroke="#3c5d92" stroke-width="1"/><path d="M2.3,-1.4 A2,2 0 1 0 2.3,1.6" fill="none" stroke="#3c5d92" stroke-width="0.9"/></g></g><path d="M273.5,329.5 L277.5,325.5 L281.5,329.5" fill="none" stroke="#333" stroke-width="1.5"/><path d="M273.5,349 L277.5,353 L281.5,349" fill="none" stroke="#333" stroke-width="1.5"/><g transform="translate(12,400)" ><rect x="-7.1" y="-7.6" width="3.2" height="3.2" fill="#f4f7fb" stroke="#3c5d92" stroke-width="0.9"/><rect x="-7.1" y="-1.6" width="3.2" height="3.2" fill="#f4f7fb" stroke="#3c5d92" stroke-width="0.9"/><rect x="-7.1" y="4.4" width="3.2" height="3.2" fill="#f4f7fb" stroke="#3c5d92" stroke-width="0.9"/><rect x="3" y="-8" width="4.5" height="16" fill="none" stroke="#3c5d92" stroke-width="0.8" stroke-dasharray="1.5,1.2"/><path d="M-3.5,0 L3,0" stroke="#3c5d92" stroke-width="1"/><path d="M1.5,-2 L4,0 L1.5,2Z" fill="#3c5d92"/><rect x="3.6" y="-1.6" width="3.2" height="3.2" fill="#f4f7fb" stroke="#3c5d92" stroke-width="0.9"/></g><g transform="translate(37,400)" ><rect x="-7.5" y="-7.5" width="6" height="15" fill="#e6edf6" stroke="#3c5d92" stroke-width="1"/><rect x="1" y="-7.5" width="6.5" height="15" fill="none" stroke="#3c5d92" stroke-width="0.8" stroke-dasharray="1.5,1.2"/><path d="M-5,0 L4,0" stroke="#3c5d92" stroke-width="1"/><path d="M2.5,-2 L5.5,0 L2.5,2Z" fill="#3c5d92"/></g><g transform="translate(62,400)" ><rect x="-7.5" y="-7.5" width="6.5" height="15" fill="none" stroke="#3c5d92" stroke-width="0.8" stroke-dasharray="1.5,1.2"/><rect x="1.5" y="-7.5" width="6" height="15" fill="#e6edf6" stroke="#3c5d92" stroke-width="1"/><path d="M-5,0 L4,0" stroke="#3c5d92" stroke-width="1"/><path d="M2.5,-2 L5.5,0 L2.5,2Z" fill="#3c5d92"/></g><g transform="translate(86,399.5)" ><path d="M-6,-3.5 L-0.5,-6.5 L5,-3.5 L5,2 L-0.5,5 L-6,2Z" fill="#fbfcfe" stroke="#9aa8bd" stroke-width="0.8"/><path d="M-6,-3.5 L-0.5,-0.5 L5,-3.5 M-0.5,-0.5 L-0.5,5" fill="none" stroke="#9aa8bd" stroke-width="0.7"/></g><g transform="translate(89,404)" ><path d="M-5,0 C-2.5,-3 2.5,-3 5,0 C2.5,3 -2.5,3 -5,0Z" fill="#f4f8fc" stroke="#8a9cba" stroke-width="0.7"/><circle r="1.8" fill="#234a84"/></g><g transform="translate(111.8,400.5)" ><circle cx="0" cy="-5.8" r="1.5" fill="#fff" stroke="#234a84" stroke-width="1.1"/><rect x="-1.6" y="-2.5" width="3.2" height="9" rx="1.4" fill="#e6edf6" stroke="#234a84" stroke-width="1.1"/></g><path d="M11.0,417 L16.0,422 L11.0,427" fill="none" stroke="#666" stroke-width="1.6"/><path d="M9.3,440.0 L13.5,445.0 L17.7,440.0" fill="none" stroke="#222" stroke-width="1.8"/><g transform="translate(35,422)" ><path d="M-2,-7 L2.5,-8.5 L6,-7 L6,1 L2,2.5 L-2,1Z" fill="#dfe7f2" stroke="#3c5d92" stroke-width="0.9"/><path d="M-6,-1.5 L-1.5,-3 L2,-1.5 L2,6 L-2,7.5 L-6,6Z" fill="#f4f7fb" stroke="#3c5d92" stroke-width="0.9"/><path d="M-6,-1.5 L-2,0 L2,-1.5 M-2,0 L-2,7.5 M-2,-7 L2,-5.5 L6,-7 M2,-5.5 L2,-1.5" fill="none" stroke="#3c5d92" stroke-width="0.8"/></g><g transform="translate(35,442)" ><circle cx="0" cy="-6" r="1.7" fill="#234a84"/><path d="M0,-4.5 L0,-0.5 M-6,3 L-6,-0.5 L6,-0.5 L6,3 M0,-0.5 L0,3" fill="none" stroke="#3c5d92" stroke-width="1"/><circle cx="-6" cy="5" r="1.9" fill="#fff" stroke="#3c5d92" stroke-width="0.9"/><circle cx="0" cy="5" r="1.9" fill="#fff" stroke="#3c5d92" stroke-width="0.9"/><circle cx="6" cy="5" r="1.9" fill="#fff" stroke="#3c5d92" stroke-width="0.9"/></g><g transform="translate(216,422)" ><g opacity="0.55"><path d="M-7.5,0 C-4,-4.5 4,-4.5 7.5,0 C4,4.5 -4,4.5 -7.5,0Z" fill="#f4f8fc" stroke="#9a9a9a" stroke-width="0.9"/><circle cx="0.3" r="3.2" fill="none" stroke="#9a9a9a" stroke-width="1"/><path d="M2.3,-1.4 A2,2 0 1 0 2.3,1.6" fill="none" stroke="#9a9a9a" stroke-width="0.9"/></g><path d="M-7,-6 L7,6" stroke="#b0b0b0" stroke-width="0.9"/></g><g transform="translate(243.5,422)" ><path d="M0,-7.5 L6.5,-3.8 L6.5,3.8 L0,7.5 L-6.5,3.8 L-6.5,-3.8Z" fill="#f4f7fb" stroke="#3c5d92" stroke-width="1.2"/><path d="M0,-4.3 L3.7,-2.1 L3.7,2.1 L0,4.3 L-3.7,2.1 L-3.7,-2.1Z" fill="#fff" stroke="#3c5d92" stroke-width="0.9"/><path d="M-3.7,-2.1 L0,0 L3.7,-2.1 M0,0 L0,4.3" fill="none" stroke="#3c5d92" stroke-width="0.9"/></g><g transform="translate(272,421.5)" ><rect x="-6" y="-0.5" width="11.5" height="7.5" rx="0.8" fill="#8190aa"/><path d="M-1.5,-0.5 L-1.5,-4 A3,3 0 0 1 4.5,-4 L4.5,-2.5" fill="none" stroke="#8190aa" stroke-width="1.2"/><rect x="1.3" y="2" width="1.6" height="2.8" fill="#fff"/></g><g transform="translate(216,442)" ><g opacity="1"><path d="M-7.5,0 C-4,-4.5 4,-4.5 7.5,0 C4,4.5 -4,4.5 -7.5,0Z" fill="#f4f8fc" stroke="#3c5d92" stroke-width="0.9"/><circle cx="0.3" r="3.2" fill="none" stroke="#3c5d92" stroke-width="1"/><path d="M2.3,-1.4 A2,2 0 1 0 2.3,1.6" fill="none" stroke="#3c5d92" stroke-width="0.9"/></g></g><g transform="translate(243.5,442)" ><path d="M0,-7.5 L6.5,-3.8 L6.5,3.8 L0,7.5 L-6.5,3.8 L-6.5,-3.8Z" fill="#c6d4ea" stroke="#3c5d92" stroke-width="1.2"/><path d="M0,-4.3 L3.7,-2.1 L3.7,2.1 L0,4.3 L-3.7,2.1 L-3.7,-2.1Z" fill="#fff" stroke="#3c5d92" stroke-width="0.9"/><path d="M-3.7,-2.1 L0,0 L3.7,-2.1 M0,0 L0,4.3" fill="none" stroke="#3c5d92" stroke-width="0.9"/></g><g transform="translate(272,441.5)" ><rect x="-6" y="-0.5" width="11.5" height="7.5" rx="0.8" fill="#8190aa"/><path d="M-1.5,-0.5 L-1.5,-4 A3,3 0 0 1 4.5,-4 L4.5,-2.5" fill="none" stroke="#8190aa" stroke-width="1.2"/><rect x="1.3" y="2" width="1.6" height="2.8" fill="#fff"/></g><g transform="translate(216,462)" ><g opacity="1"><path d="M-7.5,0 C-4,-4.5 4,-4.5 7.5,0 C4,4.5 -4,4.5 -7.5,0Z" fill="#f4f8fc" stroke="#3c5d92" stroke-width="0.9"/><circle cx="0.3" r="3.2" fill="none" stroke="#3c5d92" stroke-width="1"/><path d="M2.3,-1.4 A2,2 0 1 0 2.3,1.6" fill="none" stroke="#3c5d92" stroke-width="0.9"/></g></g><g transform="translate(243.5,462)" ><path d="M0,-7.5 L6.5,-3.8 L6.5,3.8 L0,7.5 L-6.5,3.8 L-6.5,-3.8Z" fill="#c6d4ea" stroke="#3c5d92" stroke-width="1.2"/><path d="M0,-4.3 L3.7,-2.1 L3.7,2.1 L0,4.3 L-3.7,2.1 L-3.7,-2.1Z" fill="#fff" stroke="#3c5d92" stroke-width="0.9"/><path d="M-3.7,-2.1 L0,0 L3.7,-2.1 M0,0 L0,4.3" fill="none" stroke="#3c5d92" stroke-width="0.9"/></g><g transform="translate(272,461.5)" ><rect x="-6" y="-0.5" width="11.5" height="7.5" rx="0.8" fill="#8190aa"/><path d="M-1.5,-0.5 L-1.5,-4 A3,3 0 0 1 4.5,-4 L4.5,-2.5" fill="none" stroke="#8190aa" stroke-width="1.2"/><rect x="1.3" y="2" width="1.6" height="2.8" fill="#fff"/></g><g transform="translate(216,482)" ><g opacity="1"><path d="M-7.5,0 C-4,-4.5 4,-4.5 7.5,0 C4,4.5 -4,4.5 -7.5,0Z" fill="#f4f8fc" stroke="#3c5d92" stroke-width="0.9"/><circle cx="0.3" r="3.2" fill="none" stroke="#3c5d92" stroke-width="1"/><path d="M2.3,-1.4 A2,2 0 1 0 2.3,1.6" fill="none" stroke="#3c5d92" stroke-width="0.9"/></g></g><g transform="translate(243.5,482)" ><path d="M0,-7.5 L6.5,-3.8 L6.5,3.8 L0,7.5 L-6.5,3.8 L-6.5,-3.8Z" fill="#c6d4ea" stroke="#3c5d92" stroke-width="1.2"/><path d="M0,-4.3 L3.7,-2.1 L3.7,2.1 L0,4.3 L-3.7,2.1 L-3.7,-2.1Z" fill="#fff" stroke="#3c5d92" stroke-width="0.9"/><path d="M-3.7,-2.1 L0,0 L3.7,-2.1 M0,0 L0,4.3" fill="none" stroke="#3c5d92" stroke-width="0.9"/></g><g transform="translate(272,481.5)" ><rect x="-6" y="-0.5" width="11.5" height="7.5" rx="0.8" fill="#8190aa"/><path d="M-1.5,-0.5 L-1.5,-4 A3,3 0 0 1 4.5,-4 L4.5,-2.5" fill="none" stroke="#8190aa" stroke-width="1.2"/><rect x="1.3" y="2" width="1.6" height="2.8" fill="#fff"/></g><g transform="translate(216,502)" ><g opacity="1"><path d="M-7.5,0 C-4,-4.5 4,-4.5 7.5,0 C4,4.5 -4,4.5 -7.5,0Z" fill="#f4f8fc" stroke="#3c5d92" stroke-width="0.9"/><circle cx="0.3" r="3.2" fill="none" stroke="#3c5d92" stroke-width="1"/><path d="M2.3,-1.4 A2,2 0 1 0 2.3,1.6" fill="none" stroke="#3c5d92" stroke-width="0.9"/></g></g><g transform="translate(243.5,502)" ><path d="M0,-7.5 L6.5,-3.8 L6.5,3.8 L0,7.5 L-6.5,3.8 L-6.5,-3.8Z" fill="#c6d4ea" stroke="#3c5d92" stroke-width="1.2"/><path d="M0,-4.3 L3.7,-2.1 L3.7,2.1 L0,4.3 L-3.7,2.1 L-3.7,-2.1Z" fill="#fff" stroke="#3c5d92" stroke-width="0.9"/><path d="M-3.7,-2.1 L0,0 L3.7,-2.1 M0,0 L0,4.3" fill="none" stroke="#3c5d92" stroke-width="0.9"/></g><g transform="translate(272,501.5)" ><rect x="-6" y="-0.5" width="11.5" height="7.5" rx="0.8" fill="#8190aa"/><path d="M-1.5,-0.5 L-1.5,-4 A3,3 0 0 1 4.5,-4 L4.5,-2.5" fill="none" stroke="#8190aa" stroke-width="1.2"/><rect x="1.3" y="2" width="1.6" height="2.8" fill="#fff"/></g><g transform="translate(216,522)" ><g opacity="1"><path d="M-7.5,0 C-4,-4.5 4,-4.5 7.5,0 C4,4.5 -4,4.5 -7.5,0Z" fill="#f4f8fc" stroke="#3c5d92" stroke-width="0.9"/><circle cx="0.3" r="3.2" fill="none" stroke="#3c5d92" stroke-width="1"/><path d="M2.3,-1.4 A2,2 0 1 0 2.3,1.6" fill="none" stroke="#3c5d92" stroke-width="0.9"/></g></g><g transform="translate(243.5,522)" ><path d="M0,-7.5 L6.5,-3.8 L6.5,3.8 L0,7.5 L-6.5,3.8 L-6.5,-3.8Z" fill="#c6d4ea" stroke="#3c5d92" stroke-width="1.2"/><path d="M0,-4.3 L3.7,-2.1 L3.7,2.1 L0,4.3 L-3.7,2.1 L-3.7,-2.1Z" fill="#fff" stroke="#3c5d92" stroke-width="0.9"/><path d="M-3.7,-2.1 L0,0 L3.7,-2.1 M0,0 L0,4.3" fill="none" stroke="#3c5d92" stroke-width="0.9"/></g><g transform="translate(272,521.5)" ><rect x="-6" y="-0.5" width="11.5" height="7.5" rx="0.8" fill="#8190aa"/><path d="M-1.5,-0.5 L-1.5,-4 A3,3 0 0 1 4.5,-4 L4.5,-2.5" fill="none" stroke="#8190aa" stroke-width="1.2"/><rect x="1.3" y="2" width="1.6" height="2.8" fill="#fff"/></g><g transform="translate(216,542)" ><g opacity="1"><path d="M-7.5,0 C-4,-4.5 4,-4.5 7.5,0 C4,4.5 -4,4.5 -7.5,0Z" fill="#f4f8fc" stroke="#3c5d92" stroke-width="0.9"/><circle cx="0.3" r="3.2" fill="none" stroke="#3c5d92" stroke-width="1"/><path d="M2.3,-1.4 A2,2 0 1 0 2.3,1.6" fill="none" stroke="#3c5d92" stroke-width="0.9"/></g></g><g transform="translate(243.5,542)" ><path d="M0,-7.5 L6.5,-3.8 L6.5,3.8 L0,7.5 L-6.5,3.8 L-6.5,-3.8Z" fill="#c6d4ea" stroke="#3c5d92" stroke-width="1.2"/><path d="M0,-4.3 L3.7,-2.1 L3.7,2.1 L0,4.3 L-3.7,2.1 L-3.7,-2.1Z" fill="#fff" stroke="#3c5d92" stroke-width="0.9"/><path d="M-3.7,-2.1 L0,0 L3.7,-2.1 M0,0 L0,4.3" fill="none" stroke="#3c5d92" stroke-width="0.9"/></g><g transform="translate(272,541.5)" ><rect x="-6" y="-0.5" width="11.5" height="7.5" rx="0.8" fill="#8190aa"/><path d="M-1.5,-0.5 L-1.5,-4 A3,3 0 0 1 4.5,-4 L4.5,-2.5" fill="none" stroke="#8190aa" stroke-width="1.2"/><rect x="1.3" y="2" width="1.6" height="2.8" fill="#fff"/></g><g transform="translate(11,592)" ><rect x="-8" y="-2" width="16" height="3.6" fill="#f8fafc" stroke="#8a9cba" stroke-width="0.8"/><path d="M0,-6.5 L0,-3" stroke="#a8b6cc" stroke-width="0.7"/><path d="M1,4.5 L5.5,4.5" stroke="#7f93b5" stroke-width="0.8"/><path d="M4.5,3 L7,4.5 L4.5,6Z" fill="#7f93b5"/></g><g transform="translate(11,614)" ><rect x="-8" y="-2" width="16" height="3.6" fill="#f8fafc" stroke="#8a9cba" stroke-width="0.8"/><path d="M0,-6.5 L0,-3" stroke="#a8b6cc" stroke-width="0.7"/><path d="M-1,4.5 L-5.5,4.5" stroke="#7f93b5" stroke-width="0.8"/><path d="M-4.5,3 L-7,4.5 L-4.5,6Z" fill="#7f93b5"/></g><g transform="translate(11,635)" ><path d="M-7,-1 L-3.5,-4 L6.5,-4 L6.5,1.5 L3,4.5 L-7,4.5Z" fill="#f8fafc" stroke="#7f93b5" stroke-width="0.9" stroke-linejoin="round"/><path d="M-7,-1 L3,-1 L6.5,-4 M3,-1 L3,4.5" fill="none" stroke="#7f93b5" stroke-width="0.8"/></g><g transform="translate(11,657)" ><path d="M-7.5,-2.5 L0,-6.5 L7.5,-3 L7.5,-1 L0,-4 L-7.5,0Z" fill="#b5c3d8" stroke="#7f93b5" stroke-width="0.8"/><path d="M-6,0 L-6,6.5 L-1,6.5 L-1,2 M4,-1 L4,5" fill="none" stroke="#9aa8bd" stroke-width="0.9"/><path d="M0,-4 L0,0" stroke="#7f93b5" stroke-width="0.8"/></g><g transform="translate(11,679)" ><rect x="-7" y="-6" width="8" height="12.5" fill="#f4f7fb" stroke="#3c5d92" stroke-width="0.9"/><rect x="1" y="-3" width="6" height="9.5" fill="#f4f7fb" stroke="#3c5d92" stroke-width="0.9"/><path d="M-5,-3.5 L-3.5,-3.5 M-2,-3.5 L-0.5,-3.5 M-5,-0.5 L-3.5,-0.5 M-2,-0.5 L-0.5,-0.5 M-5,2.5 L-3.5,2.5 M-2,2.5 L-0.5,2.5 M3,-0.5 L5,-0.5 M3,2.5 L5,2.5" stroke="#3c5d92" stroke-width="1.3"/></g><g transform="translate(11,702)" ><path d="M-5,-1 L5,-1 L4.5,6.5 L-4.5,6.5Z" fill="#fbfcfe" stroke="#a8b6cc" stroke-width="0.8"/><path d="M-5.5,1.5 L5.5,1.5" stroke="#d8a0a8" stroke-width="0.7"/><path d="M-3,-1.5 L-4.5,-7 M0,-1.5 L0,-8 M3,-1.5 L4.5,-6.5 M-1.5,-1.5 L-2,-5" stroke="#7f93b5" stroke-width="1"/></g><g transform="translate(11,748) scale(0.92)" ><circle cx="0" cy="1.8" r="6.8" fill="#f2f6fb" stroke="#c5d1e2" stroke-width="0.7"/><path d="M-6.2,-0.8 A6.6,6.6 0 0 1 2.6,-4.8" fill="none" stroke="#234a84" stroke-width="1.3"/><path d="M1.3,-7.9 L6.2,-4.5 L1,-1.8Z" fill="#234a84"/><text x="-7.3" y="7" font-family="Liberation Sans, sans-serif" font-size="10" font-weight="bold" fill="#234a84" stroke="#fff" stroke-width="1.4" paint-order="stroke" letter-spacing="-0.5">3D</text></g><g transform="translate(11,770) scale(0.92)" ><circle cx="0" cy="1.8" r="6.8" fill="#f2f6fb" stroke="#c5d1e2" stroke-width="0.7"/><path d="M-6.2,-0.8 A6.6,6.6 0 0 1 2.6,-4.8" fill="none" stroke="#234a84" stroke-width="1.3"/><path d="M1.3,-7.9 L6.2,-4.5 L1,-1.8Z" fill="#234a84"/><text x="-7.3" y="7" font-family="Liberation Sans, sans-serif" font-size="10" font-weight="bold" fill="#234a84" stroke="#fff" stroke-width="1.4" paint-order="stroke" letter-spacing="-0.5">3D</text></g><path d="M289.5,566 L289.5,581" stroke="#bdbdbd" stroke-width="1.4" stroke-dasharray="1.4,2"/></svg>
</body></html>
